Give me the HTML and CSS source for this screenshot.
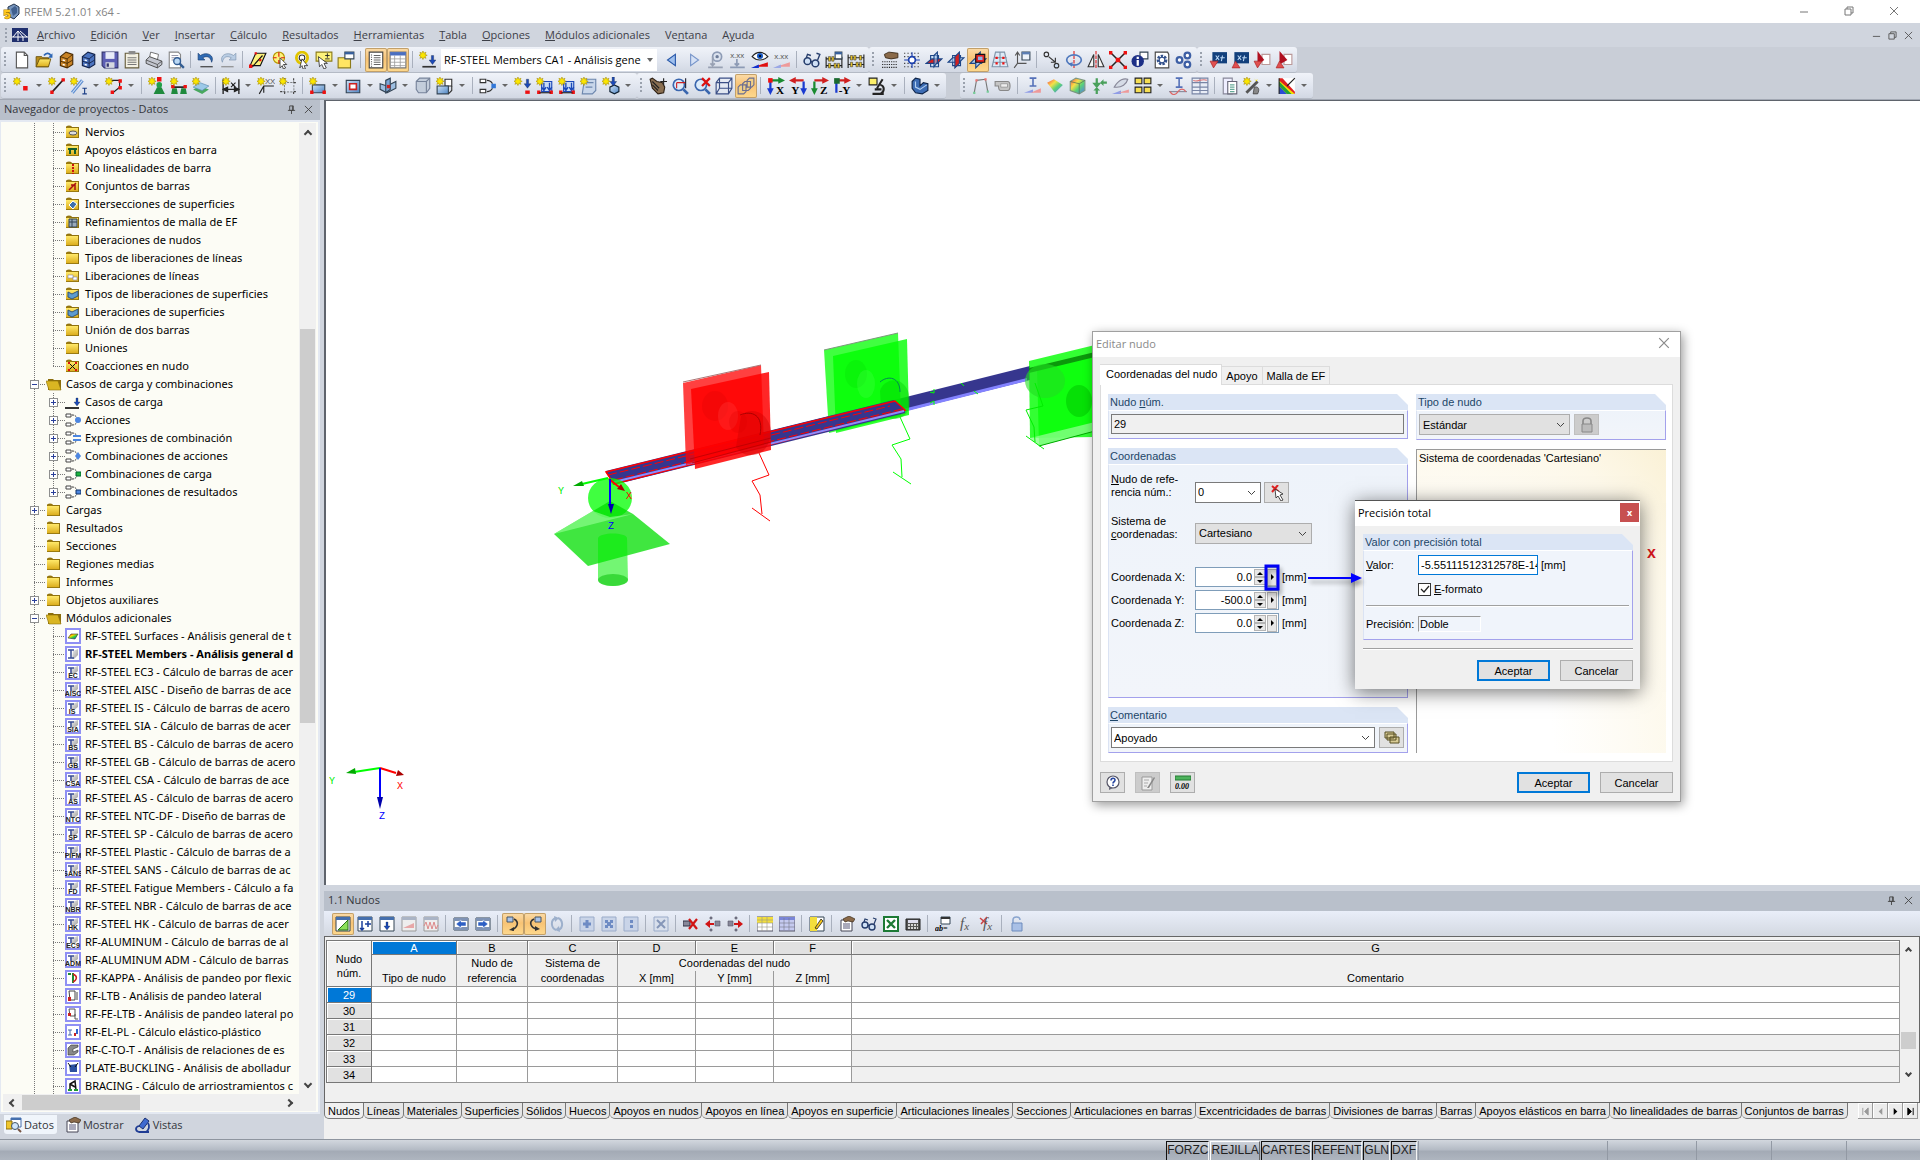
FILE: index.html
```html
<!DOCTYPE html>
<html lang="es">
<head>
<meta charset="utf-8">
<title>RFEM 5.21.01 x64</title>
<link rel="stylesheet" href="styles.css">
</head>
<body>
<svg class="sprite" aria-hidden="true">
<defs>
<linearGradient id="gy" x2="0" y2="1"><stop stop-color="#ffe96a"/><stop offset="1" stop-color="#dcae1e"/></linearGradient>
<linearGradient id="gb" x2="1" y2="1"><stop stop-color="#cfe2f7"/><stop offset="1" stop-color="#4f86c4"/></linearGradient>
<linearGradient id="gr" x2="1" y2="1"><stop stop-color="#f00"/><stop offset=".35" stop-color="#fd0"/><stop offset=".6" stop-color="#2c4"/><stop offset="1" stop-color="#24f"/></linearGradient>
<linearGradient id="gm" x2="1" y2="1"><stop stop-color="#f4f4f4"/><stop offset="1" stop-color="#9a9a9a"/></linearGradient>
<path id="st" d="M3.500 0l.8 1.900 1.900-.8-.8 1.900 1.900.8-1.900.8.8 1.900-1.900-.8-.8 1.900-.8-1.900-1.900.8.8-1.900-1.900-.8 1.900-.8-.8-1.900 1.900.8z" fill="#fbe600" stroke="#a88c00" stroke-width=".5"/>
<path id="dn" d="M-1-4h2v4h2l-3 4-3-4h2z" fill="#1c49b8" stroke="#123" stroke-width=".3"/>
</defs>
<symbol id="new" viewBox="0 0 16 16"><path d="M3 1h7l3 3v11H3z" fill="#fff" stroke="#555"/><path d="M10 1v3h3" fill="none" stroke="#555"/></symbol>
<symbol id="open" viewBox="0 0 16 16"><path d="M1 5h5l1 1h5v8H1z" fill="#b98e1c" stroke="#6b520b" stroke-width=".8"/><path d="M1 14l3-7h10l-2 7z" fill="url(#gy)" stroke="#6b520b" stroke-width=".8"/><path d="M8 4c2-3 5-2 6 0" fill="none" stroke="#2b65b5" stroke-width="1.500"/><path d="M15.500 2v4h-4z" fill="#2b65b5"/></symbol>
<symbol id="cabb" viewBox="0 0 16 16"><path d="M3 5l5-4 6 2v9l-5 3-6-2z" fill="#c98325" stroke="#4a2c05"/><path d="M3 5l6 2 5-4M9 7v8M3 9l6 2 5-3" fill="none" stroke="#4a2c05" stroke-width=".8"/><path d="M5 8l2 .6M5 12l2 .6" stroke="#fff" stroke-width="1.200"/></symbol>
<symbol id="cabl" viewBox="0 0 16 16"><path d="M3 5l5-4 6 2v9l-5 3-6-2z" fill="#4c74c0" stroke="#12224a"/><path d="M3 5l6 2 5-4M9 7v8M3 9l6 2 5-3" fill="none" stroke="#12224a" stroke-width=".8"/><path d="M5 8l2 .6M5 12l2 .6" stroke="#fff" stroke-width="1.200"/></symbol>
<symbol id="save" viewBox="0 0 16 16"><path d="M1 1h14v14H3l-2-2z" fill="#5d5fb4" stroke="#33356f"/><path d="M4 1h8v6H4z" fill="#e8ecf8"/><path d="M4 10h8v5H4z" fill="#d5d8e0"/><path d="M5 11h2v3H5z" fill="#33356f"/></symbol>
<symbol id="clip" viewBox="0 0 16 16"><path d="M2 2h12v13H2z" fill="#f3f0e2" stroke="#665c3c"/><path d="M4 6h8M4 8h8M4 10h8M4 12h8" stroke="#777"/><path d="M5 0h6v3H5z" fill="#8b8b8b"/></symbol>
<symbol id="print" viewBox="0 0 16 16"><path d="M5 1l7 2-1 5-7-2z" fill="#fff" stroke="#666" stroke-width=".8"/><path d="M1 8l3-3 11 4v3l-4 3L1 11z" fill="#c3c6cf" stroke="#444" stroke-width=".8"/><path d="M1 8l10 4 4-3M11 12v3" fill="none" stroke="#444" stroke-width=".7"/></symbol>
<symbol id="prev" viewBox="0 0 16 16"><path d="M2 1h8l2 2v12H2z" fill="#fff" stroke="#888"/><path d="M4 4h6M4 6h6M4 8h4" stroke="#99a"/><circle cx="9" cy="9" r="3" fill="#bcd9f5" stroke="#335d93" stroke-width="1.200"/><path d="M11 11l4 4" stroke="#335d93" stroke-width="2"/></symbol>
<symbol id="undo" viewBox="0 0 16 16"><path d="M1 2v6h6L5 6c4-2 7-1 8 4 3-6-4-10-10-6z" fill="#2f6bb5" stroke="#163b70" stroke-width=".6"/><path d="M3 14h11" stroke="#333"/></symbol>
<symbol id="redo" viewBox="0 0 16 16"><path d="M15 2v6H9l2-2C7 4 4 5 3 10 0 4 7 0 13 4z" fill="#b9cde4" stroke="#7d93ae" stroke-width=".6"/><path d="M2 14h11" stroke="#888"/></symbol>
<symbol id="para" viewBox="0 0 16 16"><path d="M6 2h9l-5 11H1z" fill="#fdf27b" stroke="#111"/><path d="M3 14L12 4" stroke="#111"/><path d="M5 1h2v2H5zM0 12h3v3H0zM9 7h2v2H9z" fill="#e11"/></symbol>
<symbol id="sel" viewBox="0 0 16 16"><circle cx="7" cy="6" r="5" fill="#fdf27b" stroke="#b59700"/><path d="M7 1v4M7 8v3M2 6h3M9 6h3" stroke="#d11"/><path d="M8 6l6 6-3 0 2 3-2 1-1-3-2 2z" fill="#fff" stroke="#222" stroke-width=".7"/></symbol>
<symbol id="sel2" viewBox="0 0 16 16"><circle cx="8" cy="6" r="5" fill="#fff" stroke="#e0c400" stroke-width="2.500"/><circle cx="8" cy="6" r="2.500" fill="none" stroke="#333"/><path d="M8 7l5 6-3 0 1 3-2 0-1-3-2 2z" fill="#fff" stroke="#222" stroke-width=".7"/></symbol>
<symbol id="selb" viewBox="0 0 16 16"><path d="M1 1h14v8H1z" fill="#fdf27b" stroke="#8d7c1b"/><path d="M9 4h4M11 2v4M9 7h4" stroke="#222" stroke-width=".8"/><path d="M3 5l1 9 2-2 2 4 2-1-2-4h3z" fill="#fff" stroke="#222" stroke-width=".7"/></symbol>
<symbol id="note" viewBox="0 0 16 16"><path d="M1 6h11v9H1z" fill="#ffe562" stroke="#8d7c1b"/><path d="M7 1h8v6H7z" fill="#fff" stroke="#345"/><path d="M7 1h8v2H7z" fill="#345f9e"/></symbol>
<symbol id="nav1" viewBox="0 0 16 16"><path d="M2 1h12v14H2z" fill="#fff" stroke="#444"/><path d="M4 3v11" stroke="#555" stroke-dasharray="1 1"/><path d="M6 4h6M6 6h6M6 8h6M6 10h6M6 12h6" stroke="#555" stroke-width=".8"/></symbol>
<symbol id="nav2" viewBox="0 0 16 16"><path d="M1 1h14v14H1z" fill="#fff" stroke="#777"/><path d="M1 1h14v3H1z" fill="#4b6fc0"/><path d="M1 7h14M1 10h14M1 13h14M5 4v11M10 4v11" stroke="#999" stroke-width=".7"/></symbol>
<symbol id="lcn" viewBox="0 0 16 16"><use href="#st"/><use href="#dn" x="12" y="8"/><path d="M3 14h12" stroke="#333" stroke-width="1.500"/></symbol>
<symbol id="lt" viewBox="0 0 16 16"><path d="M11 3v10L4 8z" fill="#9fc0ee" stroke="#2757a8"/></symbol>
<symbol id="rt" viewBox="0 0 16 16"><path d="M5 3v10l7-5z" fill="#d5e1f5" stroke="#7694c9"/></symbol>
<symbol id="seel" viewBox="0 0 16 16"><circle cx="9" cy="5" r="4" fill="#dbe2ee" stroke="#8d9bb5" stroke-width="1.500"/><circle cx="9" cy="5" r="1.500" fill="#6d7c99"/><path d="M5 5v8M3 11l2 2 2-2M1 14.500h13" fill="none" stroke="#98a1b3" stroke-width="1.500"/></symbol>
<symbol id="xx1" viewBox="0 0 16 16"><path d="M7 7v6M5 11l2 2 2-2M1 14.500h13" fill="none" stroke="#8d9bb5" stroke-width="1.500"/></symbol>
<symbol id="eye" viewBox="0 0 16 16"><path d="M1 5c4-5 10-5 14 0-4 4-10 4-14 0z" fill="#fff" stroke="#222"/><circle cx="8" cy="4.500" r="2.700" fill="#1757c0"/><circle cx="8" cy="4.500" r="1" fill="#000"/><path d="M3 14L15 10v4z" fill="#e01010"/><path d="M0 15l7-3v3z" fill="#1130d0"/></symbol>
<symbol id="xx2" viewBox="0 0 16 16"><path d="M3 14L15 10v4z" fill="#ee9a9a"/><path d="M0 15l7-3v3z" fill="#9aa8e6"/></symbol>
<symbol id="glas" viewBox="0 0 16 16"><circle cx="4" cy="9" r="3" fill="#cfe0f5" stroke="#253c6b" stroke-width="1.400"/><circle cx="11" cy="11" r="3" fill="#cfe0f5" stroke="#253c6b" stroke-width="1.400"/><path d="M3 6l1-3 3 1M13 8l2-5-3-1M7 9l1 1" fill="none" stroke="#253c6b" stroke-width="1.200"/></symbol>
<symbol id="abac" viewBox="0 0 16 16"><path d="M1 5v10M15 5v10M1 7h14M1 13h14" stroke="#222"/><path d="M3 5h2v4H3zM6 5h2v4H6zM3 11h2v4H3zM8 11h2v4H8zM11 11h2v4h-2z" fill="#e6c229" stroke="#333" stroke-width=".5"/><path d="M9 1h6v6H9z" fill="#fff" stroke="#345"/><path d="M9 1h6v2H9z" fill="#345f9e"/></symbol>
<symbol id="aba2" viewBox="0 0 16 16"><path d="M1 3v12M15 3v12M1 6h14M1 12h14" stroke="#222"/><path d="M3 4h2v4H3zM6 4h2v4H6zM11 4h2v4h-2zM3 10h2v4H3zM8 10h2v4H8zM11 10h2v4h-2z" fill="#e6c229" stroke="#333" stroke-width=".5"/></symbol>
<symbol id="hand" viewBox="0 0 16 16"><path d="M3 3l4-2 8 1v4l-6 1-5-1z" fill="#8a6a4a" stroke="#3b2a18" stroke-width=".8"/><path d="M1 9.500h14M1 12h14M1 14.500h14" stroke="#222" stroke-dasharray="1 1"/></symbol>
<symbol id="snap" viewBox="0 0 16 16"><path d="M1 2h14M1 5h14M1 11h14M1 14h14" stroke="#333" stroke-dasharray="1 2"/><path d="M8 1v14M1 8h14" stroke="#1b3fae"/><circle cx="8" cy="8" r="3" fill="#fff" stroke="#1b3fae" stroke-width="1.500"/></symbol>
<symbol id="wp1" viewBox="0 0 16 16"><path d="M5 4h7v10H5z" fill="#cfe0f5" stroke="#1c4587"/><path d="M1 11l5-4h9l-4 4z" fill="#d42020" stroke="#1c4587"/><path d="M8 4l3-3v9l-3 4z" fill="#a9c8ee" fill-opacity=".6" stroke="#1c4587"/></symbol>
<symbol id="wp2" viewBox="0 0 16 16"><path d="M5 4h7v9H5z" fill="#cfe0f5" stroke="#1c4587"/><path d="M1 10l4-4h10l-4 4z" fill="#a9c8ee" fill-opacity=".6" stroke="#1c4587"/><path d="M7 5l4-4v10l-4 4z" fill="#d42020" stroke="#1c4587"/></symbol>
<symbol id="wp3" viewBox="0 0 16 16"><path d="M1 11l4-4h10l-4 4z" fill="#a9c8ee" stroke="#1c4587"/><path d="M6 5l4-4v10l-4 4z" fill="#a9c8ee" stroke="#1c4587"/><path d="M6 3h8v7H6z" fill="#e02020" stroke="#111"/><path d="M8 5h4v3H8z" fill="#8fb3e6"/></symbol>
<symbol id="mesh" viewBox="0 0 16 16"><path d="M4 1l-3 13h14L12 1zM3 6h11M2 10h12M8 1v13" fill="#dceaf7" stroke="#7f93a8"/><path d="M4 5h2v2H4zM10 5h2v2h-2zM4 10h2v2H4zM10 10h2v2h-2z" fill="#e11"/></symbol>
<symbol id="cord" viewBox="0 0 16 16"><path d="M4 2v9h8M4 11l-3 4M2 4l2-3 2 3" fill="none" stroke="#555"/><path d="M8 1h7v7H8z" fill="#eef3fa" stroke="#345"/><path d="M8 1h7v2H8z" fill="#5d7fb5"/></symbol>
<symbol id="cpy" viewBox="0 0 16 16"><circle cx="3" cy="3" r="2" fill="none" stroke="#333"/><circle cx="12" cy="13" r="2" fill="#cfe0f5" stroke="#333"/><path d="M5 5l6 5M11 6v4H7" fill="none" stroke="#333"/></symbol>
<symbol id="rot" viewBox="0 0 16 16"><path d="M8 0v16" stroke="#d22" stroke-dasharray="3 1"/><ellipse cx="8" cy="8" rx="6.500" ry="4.500" fill="none" stroke="#4f78bd" stroke-width="1.500"/><path d="M3 11l4-1-1 4z" fill="#4f78bd"/></symbol>
<symbol id="mir" viewBox="0 0 16 16"><path d="M8 0v16" stroke="#d22" stroke-dasharray="3 1"/><path d="M6 3v11H1zM10 3v11h5z" fill="#f4f4f4" stroke="#333"/></symbol>
<symbol id="xred" viewBox="0 0 16 16"><path d="M2 2l12 12M14 2L2 14" stroke="#222" stroke-width="1.300"/><path d="M0 0h3v3H0zM13 0h3v3h-3zM0 13h3v3H0zM13 13h3v3h-3zM6 6h4v4H6z" fill="#e11"/></symbol>
<symbol id="info" viewBox="0 0 16 16"><path d="M8 1h7v6H8z" fill="#fff" stroke="#345"/><circle cx="6" cy="9" r="5.500" fill="#1c2f86"/><path d="M6 5v2M6 8v5" stroke="#fff" stroke-width="2"/></symbol>
<symbol id="gearp" viewBox="0 0 16 16"><path d="M2 1h11l1 2v12H2z" fill="#fff" stroke="#444"/><circle cx="8" cy="8" r="3.500" fill="none" stroke="#33518c" stroke-width="2.500" stroke-dasharray="2 1"/><circle cx="8" cy="8" r="2.500" fill="none" stroke="#33518c"/></symbol>
<symbol id="gears" viewBox="0 0 16 16"><g fill="#fff" stroke="#3d5fa5" stroke-width="2"><circle cx="4" cy="8" r="2.500"/><circle cx="11" cy="4" r="2.500"/><circle cx="11" cy="12" r="2.500"/></g></symbol>
<symbol id="xdn" viewBox="0 0 16 16"><path d="M3 1h13v10H3z" fill="#12407c"/><path d="M6 4l3 4M9 4L6 8M12 4l-1 5M10 6h4" stroke="#bcd8f5"/><path d="M1 9h7l-4 6z" fill="#e05050" stroke="#a22" stroke-width=".6"/></symbol>
<symbol id="xup" viewBox="0 0 16 16"><path d="M3 1h13v10H3z" fill="#12407c"/><path d="M6 4l3 4M9 4L6 8M12 4l-1 5M10 6h4" stroke="#bcd8f5"/><path d="M1 15h7L4 9z" fill="#e05050" stroke="#a22" stroke-width=".6"/></symbol>
<symbol id="pdn" viewBox="0 0 16 16"><path d="M8 3h7v9H8z" fill="#fff" stroke="#b99"/><path d="M4 0l6 8-6 4z" fill="#b01020"/><path d="M1 9h7l-4 6z" fill="#e05050" stroke="#a22" stroke-width=".6"/></symbol>
<symbol id="pup" viewBox="0 0 16 16"><path d="M8 3h7v9H8z" fill="#fff" stroke="#b99"/><path d="M4 0l7 8-7 4z" fill="#b01020"/><path d="M1 15h7L4 9z" fill="#e05050" stroke="#a22" stroke-width=".6"/></symbol>
<symbol id="nnode" viewBox="0 0 16 16"><use href="#st"/><path d="M9 8h4v4H9z" fill="#e11"/></symbol>
<symbol id="nline" viewBox="0 0 16 16"><path d="M4 13L14 2" stroke="#222" stroke-width="1.500"/><path d="M2 12h3v3H2zM12 1h3v3h-3z" fill="#e11"/><use href="#st"/></symbol>
<symbol id="nbar" viewBox="0 0 16 16"><path d="M2 14L11 3" stroke="#5b8cd0" stroke-width="3"/><path d="M2 14L11 3" stroke="#cfe0f5"/><path d="M11 10h4M13 10v5M11 15h4" stroke="#1c3f86"/><use href="#st"/></symbol>
<symbol id="npoly" viewBox="0 0 16 16"><path d="M6 3h7v6l-6 5" fill="none" stroke="#222"/><path d="M12 2h3v3h-3zM12 8h3v3h-3zM5 12h3v3H5z" fill="#e11"/><use href="#st"/></symbol>
<symbol id="nsup" viewBox="0 0 16 16"><circle cx="10" cy="7" r="2.500" fill="#22a04a"/><path d="M8 9h4l3 6H5z" fill="#1f8a3e"/><path d="M8 0h4v4H8z" fill="#e11"/><use href="#st"/></symbol>
<symbol id="nlsu" viewBox="0 0 16 16"><path d="M3 9h10" stroke="#222" stroke-width="1.500"/><path d="M2 10h4l1 5H1zM10 10h4l1 5H9z" fill="#1f8a3e"/><path d="M1 7h3v3H1zM12 7h3v3h-3z" fill="#e11"/><use href="#st"/></symbol>
<symbol id="nssu" viewBox="0 0 16 16"><path d="M1 11l6-3 8 3-6 4z" fill="#49a860"/><path d="M1 9l6-4 8 3-6 4z" fill="#9cc9e8" stroke="#5b8cb0" stroke-width=".6"/><use href="#st"/></symbol>
<symbol id="dim" viewBox="0 0 16 16"><path d="M1 2v13M15 2v13M1 11h14" stroke="#222" stroke-width="1.200"/><path d="M1 11l4-2v4zM15 11l-4-2v4zM8 5l4 4M12 5L8 9" fill="#222" stroke="#222"/><use href="#st"/></symbol>
<symbol id="xxl" viewBox="0 0 16 16"><path d="M2 15L6 8h9M6 8v6" fill="none" stroke="#222"/><use href="#st"/></symbol>
<symbol id="ngrd" viewBox="0 0 16 16"><path d="M5 1v14M13 1v14M1 5h14M1 13h14" stroke="#444" stroke-dasharray="2 1"/><path d="M5 5h8v8H5z" fill="#e3e8f2"/><use href="#st"/></symbol>
<symbol id="nsrf" viewBox="0 0 16 16"><path d="M3 7h11v7H3z" fill="url(#gb)" stroke="#345"/><path d="M1 12h3v3H1zM12 12h3v3h-3z" fill="#e11"/><use href="#st"/></symbol>
<symbol id="nope" viewBox="0 0 16 16"><path d="M2 3h12v11H2z" fill="url(#gb)" stroke="#345"/><path d="M5 6h6v5H5z" fill="#fff" stroke="#c22" stroke-width="1.400"/></symbol>
<symbol id="nint" viewBox="0 0 16 16"><path d="M1 6l6 2 8-4v6l-8 4-6-3z" fill="#9dbfe2" stroke="#345"/><path d="M6 3l4-2v10l-4 3z" fill="#7aa5d6" stroke="#345"/><path d="M7 7h3v3H7z" fill="#c22"/></symbol>
<symbol id="nsol" viewBox="0 0 16 16"><path d="M2 4l3-3h9v9l-3 4H4l-2-3z" fill="#c3cddb" stroke="#76839a"/><path d="M2 4h9l3-3M11 4v10" fill="none" stroke="#76839a"/></symbol>
<symbol id="nsol2" viewBox="0 0 16 16"><path d="M8 2h6v6H8z" fill="#fff" stroke="#333"/><path d="M1 8h10v7H1z" fill="url(#gb)" stroke="#345"/><path d="M11 15l3-3V8" fill="none" stroke="#333"/><use href="#st"/></symbol>
<symbol id="comb" viewBox="0 0 16 16"><path d="M1 2h5v3H1zM1 11h5v3H1z" fill="#fff" stroke="#333"/><path d="M7 3c3 0 4 1 5 3M7 13c3 0 4-1 5-3" fill="none" stroke="#333"/><path d="M11 6h4v4h-4z" fill="#3378d8"/></symbol>
<symbol id="nfor" viewBox="0 0 16 16"><use href="#dn" x="12" y="6"/><path d="M10 12h4v3h-4z" fill="#e11"/><use href="#st"/></symbol>
<symbol id="nlfo" viewBox="0 0 16 16"><path d="M5 4h9v9H5z" fill="#c9dcf4" stroke="#1c49b8"/><path d="M7 5v6M12 5v6M5 9l2 3 2-3M10 9l2 3 2-3" fill="none" stroke="#1c49b8" stroke-width="1.200"/><path d="M1 12h3v3H1zM12 12h3v3h-3z" fill="#e11"/><path d="M3 14h10" stroke="#222"/><use href="#st"/></symbol>
<symbol id="nsfo" viewBox="0 0 16 16"><path d="M4 2h10v10l-3 3H2z" fill="#c8d6ea" stroke="#6c86ad"/><path d="M6 5h6M5 9h6" stroke="#6c86ad"/><use href="#st"/></symbol>
<symbol id="nvfo" viewBox="0 0 16 16"><path d="M7 9l4-2 4 2v4l-4 2-4-2z" fill="url(#gb)" stroke="#123"/><use href="#dn" x="10" y="4"/><use href="#st"/></symbol>
<symbol id="pan" viewBox="0 0 16 16"><path d="M1 2l2-1 4 3 5 1 2 4-1 5-5 1-5-5z" fill="#8a6f52" stroke="#2e2115"/><path d="M13 1v6M10 4h6M3 4l6 6M3 7l5 5" stroke="#222"/></symbol>
<symbol id="zin" viewBox="0 0 16 16"><circle cx="7" cy="7" r="5" fill="#dcebfa" stroke="#3a66ae" stroke-width="1.500"/><path d="M5 5h8M5 5v5" fill="none" stroke="#c22"/><path d="M13 1v9" stroke="#223"/><path d="M11 11l4 4" stroke="#3a66ae" stroke-width="2.500"/></symbol>
<symbol id="zx" viewBox="0 0 16 16"><circle cx="7" cy="7" r="5" fill="#dcebfa" stroke="#3a66ae" stroke-width="1.500"/><path d="M11 11l4 4" stroke="#3a66ae" stroke-width="2.500"/><path d="M8 1l7 7M15 1L8 8" stroke="#d11" stroke-width="2"/></symbol>
<symbol id="cube" viewBox="0 0 16 16"><path d="M1 5l3-4h11v9l-3 5H1zM1 5h11v10M12 5l3-4M4 1v9h11M4 10l-3 5" fill="#e8eef8" fill-opacity=".5" stroke="#3b4f86"/></symbol>
<symbol id="cub3" viewBox="0 0 16 16"><g fill="#f0cf87" stroke="#6b6e90"><path d="M9 3l2-2h4v6l-2 2H9zM5 6l2-2h5v6l-2 2H5zM1 9l2-2h5v6l-2 2H1z"/></g></symbol>
<symbol id="vx" viewBox="0 0 16 16"><path d="M3 3h10" stroke="#1a8a30" stroke-width="2"/><path d="M10 0l6 3-6 3z" fill="#1a8a30"/><path d="M3 4v8" stroke="#1a3ad0" stroke-width="2"/><path d="M0 10h6l-3 6z" fill="#1a3ad0"/><path d="M1 1h4v4H1z" fill="#e11"/></symbol>
<symbol id="vy" viewBox="0 0 16 16"><path d="M3 3h10" stroke="#d02020" stroke-width="2"/><path d="M6 0L0 3l6 3z" fill="#d02020"/><path d="M13 4v8" stroke="#1a3ad0" stroke-width="2"/><path d="M10 10h6l-3 6z" fill="#1a3ad0"/></symbol>
<symbol id="vz" viewBox="0 0 16 16"><path d="M3 3h10" stroke="#d02020" stroke-width="2"/><path d="M10 0l6 3-6 3z" fill="#d02020"/><path d="M3 4v8" stroke="#1a8a30" stroke-width="2"/><path d="M0 10h6l-3 6z" fill="#1a8a30"/></symbol>
<symbol id="vm" viewBox="0 0 16 16"><path d="M3 3h10" stroke="#d02020" stroke-width="2"/><path d="M10 0l6 3-6 3z" fill="#d02020"/><path d="M3 4v10" stroke="#1a3ad0" stroke-width="2"/><path d="M1 1h5v5H1z" fill="#1a6a30"/></symbol>
<symbol id="micr" viewBox="0 0 16 16"><path d="M1 1h7v6H1z" fill="#fdf06a" stroke="#222"/><path d="M13 2L8 10M6 11h6M4 15h10M11 7c4 1 4 6 0 8" fill="none" stroke="#222" stroke-width="1.800"/></symbol>
<symbol id="ushp" viewBox="0 0 16 16"><path d="M1 4l3-3 4 1v6l3-3 4 1v6l-5 3-6-1-3-4z" fill="#3c6cb4" stroke="#0e2448"/><path d="M4 4v5l4 2 6-4" fill="none" stroke="#b3d0f0"/></symbol>
<symbol id="frm" viewBox="0 0 16 16"><path d="M2 14L4 3l8-1 2 11" fill="none" stroke="#777"/><path d="M3 2h2v2H3zM11 1h2v2h-2z" fill="#e77"/><path d="M1 13h2v2H1zM13 12h2v2h-2z" fill="#7c9"/></symbol>
<symbol id="barr" viewBox="0 0 16 16"><path d="M3 4h9c3 0 3 8 0 8H6c-2 0-2-3-2-4L1 8V4z" fill="#c4c4c4" stroke="#888"/><path d="M6 6h6v3H6z" fill="#eee" stroke="#888" stroke-width=".6"/></symbol>
<symbol id="ired" viewBox="0 0 16 16"><path d="M5 1h6M8 1v7M5 8h6" stroke="#5470b8" stroke-width="1.400"/><path d="M0 14l8-3v3z" fill="#8f9ce6"/><path d="M6 14l9-4v4z" fill="#e99"/></symbol>
<symbol id="rain" viewBox="0 0 16 16"><path d="M1 5l6-3 8 5-7 7z" fill="url(#gr)" opacity=".7"/></symbol>
<symbol id="raic" viewBox="0 0 16 16"><path d="M2 4l5-3 8 2v9l-5 3-8-3z" fill="url(#gr)" opacity=".7" stroke="#575"/><path d="M2 4l8 2 5-3M10 6v9" fill="none" stroke="#575" stroke-width=".7"/></symbol>
<symbol id="supg" viewBox="0 0 16 16"><path d="M6 1v5M10 5h5M6 10v5" stroke="#4aa05c" stroke-width="2" fill="none"/><path d="M2 5h8l-4 5zM3 12l3-3 3 3zM12 2v6l-3-3z" fill="#4aa05c"/></symbol>
<symbol id="leaf" viewBox="0 0 16 16"><path d="M2 9c4-7 9-8 12-7-1 4-5 8-12 7z" fill="#d5dbe6" stroke="#889"/><path d="M0 15l8-3v3z" fill="#8f9ce6"/><path d="M6 14l9-3v3z" fill="#e99"/></symbol>
<symbol id="quad" viewBox="0 0 16 16"><g fill="#f6df53" stroke="#222"><path d="M1 1h6v5H1zM9 1h6v5H9zM1 9h6v5H1zM9 9h6v5H9z"/></g></symbol>
<symbol id="icur" viewBox="0 0 16 16"><path d="M6 1h6M9 1v8M6 9h6" stroke="#5470b8" stroke-width="1.400"/><path d="M0 13h16" stroke="#889"/><path d="M1 13c2 4 5 3 7 0s5-3 7 0" fill="none" stroke="#d66"/></symbol>
<symbol id="rgrd" viewBox="0 0 16 16"><path d="M1 1h14v14H1zM1 5h14M1 9h14M1 12h14M8 1v14" fill="#e9edf6" stroke="#7885a5"/><path d="M2 3c3 2 8-2 12 0" stroke="#d77" fill="none"/></symbol>
<symbol id="rept" viewBox="0 0 16 16"><path d="M2 1h8v14H2z" fill="#eef" stroke="#889"/><path d="M6 4h8v11H6z" fill="#fff" stroke="#667"/><path d="M8 7h4M8 9h4M8 11h4M8 13h4" stroke="#6a9"/></symbol>
<symbol id="wand" viewBox="0 0 16 16"><path d="M3 14L13 4" stroke="#555" stroke-width="2.500"/><path d="M10 9c4-1 5 2 3 6H9z" fill="#888" stroke="#333" stroke-width=".6"/><path d="M10 1l1 2 2-1-1 2" fill="#f5e000"/><use href="#st"/></symbol>
<symbol id="colr" viewBox="0 0 16 16"><path d="M1 1h14v14H1z" fill="#fff"/><path d="M1 1l14 14H1z" fill="#f5e000"/><path d="M1 8l7 7H1z" fill="#2a4ad8"/><path d="M1 4l11 11H8L1 8z" fill="#22a33a"/><path d="M1 1h3l11 12v2L1 3z" fill="#e02020"/><path d="M8 8L15 1M1 15L1 1" stroke="#222"/></symbol>
<symbol id="t1" viewBox="0 0 16 16"><path d="M1 1h14v14H1z" fill="#fff" stroke="#345"/><path d="M1 1h14v3H1z" fill="#456fae"/><path d="M3 14L13 4v10z" fill="#8be05a" stroke="#276e17"/></symbol>
<symbol id="t2" viewBox="0 0 16 16"><path d="M1 1h14v14H1z" fill="#fff" stroke="#345"/><path d="M1 1h14v3H1z" fill="#456fae"/><path d="M5 5v9M3 12l2 2 2-2M11 5v6M8 8h6" stroke="#1b3f9c" stroke-width="1.500" fill="none"/></symbol>
<symbol id="t3" viewBox="0 0 16 16"><path d="M1 1h14v14H1z" fill="#fff" stroke="#345"/><path d="M1 1h14v3H1z" fill="#456fae"/><use href="#dn" x="8" y="10"/></symbol>
<symbol id="t4" viewBox="0 0 16 16"><path d="M1 1h14v14H1z" fill="#eee" stroke="#999"/><path d="M1 1h14v3H1z" fill="#aab4c6"/><path d="M2 12l11-5v5z" fill="#e7a7a7"/></symbol>
<symbol id="t5" viewBox="0 0 16 16"><path d="M1 1h14v14H1z" fill="#eee" stroke="#999"/><path d="M1 1h14v3H1z" fill="#aab4c6"/><path d="M1 10l2-4 2 7 2-7 2 7 2-7 2 7 2-4" fill="none" stroke="#d88"/></symbol>
<symbol id="t6" viewBox="0 0 16 16"><path d="M1 2h14v12H1z" fill="#fff" stroke="#345"/><path d="M1 2h14v3H1zM1 11h14v3H1z" fill="#7f93b5"/><path d="M3 8l5-4v2h5v4H8v2z" fill="#2d5fc4" stroke="#fff" stroke-width=".5"/></symbol>
<symbol id="t7" viewBox="0 0 16 16"><path d="M1 2h14v12H1z" fill="#fff" stroke="#345"/><path d="M1 2h14v3H1zM1 11h14v3H1z" fill="#7f93b5"/><path d="M13 8L8 4v2H3v4h5v2z" fill="#2d5fc4" stroke="#fff" stroke-width=".5"/></symbol>
<symbol id="t8" viewBox="0 0 16 16"><path d="M2 1h6v5H2z" fill="#a9c3e8" stroke="#456"/><path d="M9 3c6 3 3 9-2 11" fill="none" stroke="#333" stroke-width="1.600"/><path d="M4 14l5-3v4z" fill="#333"/></symbol>
<symbol id="t9" viewBox="0 0 16 16"><path d="M8 1h6v5H8z" fill="#a9c3e8" stroke="#456"/><path d="M7 3c-6 3-3 9 3 10" fill="none" stroke="#333" stroke-width="1.600"/><path d="M13 13l-5-3v5z" fill="#333"/></symbol>
<symbol id="t10" viewBox="0 0 16 16"><path d="M7 2c-6 2-5 10 0 12M9 14c6-2 5-10 0-12" fill="none" stroke="#9db0cc" stroke-width="2"/><path d="M5 0l5 2-4 4zM11 16l-5-2 4-4z" fill="#9db0cc"/></symbol>
<symbol id="p1" viewBox="0 0 16 16"><path d="M1 1h14v14H1z" fill="#c9d4e8" stroke="#9aabc9"/><path d="M8 4v8M4 8h8" stroke="#6f8cc4" stroke-width="3"/></symbol>
<symbol id="p2" viewBox="0 0 16 16"><path d="M1 1h14v14H1z" fill="#c9d4e8" stroke="#9aabc9"/><path d="M4 4h3v3H4zM9 4h3v3H9zM4 9h3v3H4zM9 9h3v3H9zM6 6h4v4H6z" fill="#6f8cc4"/></symbol>
<symbol id="p3" viewBox="0 0 16 16"><path d="M1 1h14v14H1z" fill="#c9d4e8" stroke="#9aabc9"/><path d="M7 4h3v3H7zM7 9h3v3H7z" fill="#6f8cc4"/></symbol>
<symbol id="p4" viewBox="0 0 16 16"><path d="M1 1h14v14H1z" fill="#d8dfec" stroke="#9aabc9"/><path d="M4 4l8 8M12 4l-8 8" stroke="#8596b8" stroke-width="2"/></symbol>
<symbol id="r1" viewBox="0 0 16 16"><path d="M0 5h7v5H0z" fill="#889" stroke="#334"/><path d="M6 3l8 10M14 3L6 13" stroke="#d01515" stroke-width="2.200"/></symbol>
<symbol id="r2" viewBox="0 0 16 16"><path d="M10 5h5v5h-5zM5 1h2v2H5zM5 13h2v2H5z" fill="#889" stroke="#556" stroke-width=".6"/><path d="M0 8l5-4v3h4v2H5v3z" fill="#d01515"/></symbol>
<symbol id="r3" viewBox="0 0 16 16"><path d="M1 5h5v5H1zM8 1h2v2H8zM8 13h2v2H8z" fill="#889" stroke="#556" stroke-width=".6"/><path d="M16 8l-5-4v3H7v2h4v3z" fill="#d01515"/></symbol>
<symbol id="y1" viewBox="0 0 16 16"><path d="M0 1h16v14H0z" fill="#fff" stroke="#556"/><path d="M0 1h16v6H0z" fill="#f3de3d"/><path d="M0 4h16M0 7h16M0 11h16M5 1v14M10 1v14" stroke="#998" stroke-width=".6"/></symbol>
<symbol id="y2" viewBox="0 0 16 16"><path d="M0 1h16v14H0z" fill="#c5caf0" stroke="#556"/><path d="M0 1h16v3H0z" fill="#7a86d8"/><path d="M0 7h16M0 11h16M5 2v12M10 2v12" stroke="#778" stroke-width=".6"/></symbol>
<symbol id="edt" viewBox="0 0 16 16"><path d="M1 1h14v14H1z" fill="#fff" stroke="#345"/><path d="M1 1h7v14H1z" fill="#f3de3d"/><path d="M6 12L12 3l2 2-6 8z" fill="#f5c518" stroke="#222" stroke-width=".8"/></symbol>
<symbol id="prop" viewBox="0 0 16 16"><path d="M2 4h11v11H2z" fill="#fff" stroke="#445"/><path d="M4 8h7M4 10h7M4 12h7" stroke="#557"/><path d="M4 3l6-3 6 3-2 3-5-1-3 1z" fill="#8a6a4a" stroke="#3b2a18" stroke-width=".7"/></symbol>
<symbol id="xls" viewBox="0 0 16 16"><path d="M1 1h14v14H1z" fill="#fff" stroke="#1d7a35" stroke-width="2"/><path d="M4 4l8 8M12 4l-8 8" stroke="#1d7a35" stroke-width="2.400"/></symbol>
<symbol id="calc" viewBox="0 0 16 16"><path d="M1 3h14v11H1z" fill="#555" stroke="#222"/><path d="M3 4h10v3H3z" fill="#dde"/><path d="M3 9h10M3 12h10" stroke="#fff" stroke-width="1.500" stroke-dasharray="2 1"/></symbol>
<symbol id="ab" viewBox="0 0 16 16"><path d="M6 1h9v7H6z" fill="#fff" stroke="#345"/><path d="M6 1h9v2H6z" fill="#333"/></symbol>
<symbol id="fxx" viewBox="0 0 16 16"><path d="M1 2l7 6M8 1L2 8" stroke="#c44" stroke-width="1.500"/></symbol>
<symbol id="lock" viewBox="0 0 16 16"><path d="M4 8V4c0-4 7-4 7 0" fill="none" stroke="#8aa5cf" stroke-width="1.600"/><path d="M3 7h10v8H3z" fill="#a9c0e6" stroke="#6d8bbd"/></symbol>
<symbol id="f" viewBox="0 0 16 16"><path d="M1 4V3l1-1h4l1 1h7v11H1z" fill="#9b7b10"/><path d="M1 4h12v9H1z" fill="url(#gy)"/><path d="M1.500 4V3l1-1h3l1 1.500h7V14" fill="none" stroke="#8c6e0c" stroke-width=".8"/></symbol>
<symbol id="fo" viewBox="0 0 16 16"><path d="M2 3h5l1 1h7v10H2z" fill="#8c6e0c"/><path d="M0 5h12l3 9H3z" fill="#d9b522" stroke="#8c6e0c" stroke-width=".6"/></symbol>
<symbol id="mod" viewBox="0 0 16 16"><path d="M1 1h14v14H1z" fill="#fff" stroke="#8f90f4" stroke-width="2"/><path d="M7 4l6-2v5l-4 3H6z" fill="url(#gm)"/><path d="M3 4h6M6 4v5" stroke="#3b4f94" stroke-width="1.600"/></symbol>
<symbol id="modb" viewBox="0 0 16 16"><path d="M1 1h14v14H1z" fill="#fff" stroke="#8f90f4" stroke-width="2"/></symbol>
<symbol id="cb" viewBox="0 0 16 16"><path d="M1 2h5v3H1zM1 11h5v3H1z" fill="#fff" stroke="#444"/><path d="M7 3c3 0 4 1 5 3M7 13c3 0 4-1 5-3" fill="none" stroke="#333" stroke-dasharray="2 1"/></symbol>
<symbol id="pin" viewBox="0 0 10 10"><path d="M3 1h4v5H3zM1 6h8M5 6v4M6 1v5" fill="none" stroke="#444"/></symbol>
<symbol id="cls" viewBox="0 0 10 10"><path d="M1 1l8 8M9 1L1 9" fill="none" stroke="currentColor"/></symbol>
<symbol id="rst" viewBox="0 0 10 10"><path d="M1 3h6v6H1zM3 3V1h6v6H7" fill="none" stroke="currentColor"/></symbol>
<symbol id="min" viewBox="0 0 10 10"><path d="M1 6h8" stroke="currentColor"/></symbol>
</svg>

<header class="titlebar">
  <svg class="app" viewBox="0 0 18 18"><path d="M6 4l6-3 5 3v7l-5 5-6-3z" fill="#7795bd" stroke="#22344f"/><path d="M9 6l4-3 2 2v5l-4 3z" fill="#3f5f8e"/><path d="M8 8H3v3c4-1 5 1 4 3-1 1-3 1-4 0" fill="none" stroke="#a87b00" stroke-width="3"/><path d="M8 8H3v3c4-1 5 1 4 3-1 1-3 1-4 0" fill="none" stroke="#ffc81e" stroke-width="1.800"/></svg>
  <h1>RFEM 5.21.01 x64 -</h1>
  <div class="winctl"><button aria-label="Minimizar"><svg><use href="#min"/></svg></button><button aria-label="Restaurar"><svg><use href="#rst"/></svg></button><button aria-label="Cerrar"><svg><use href="#cls"/></svg></button></div>
</header>
<nav class="menubar">
  <i class="grip"></i>
  <svg class="mdi" viewBox="0 0 16 14"><path d="M0 0h16v14H0z" fill="#20306e"/><path d="M0 9h16M6 3v10M6 3L1 9M6 3l5 6M8 3l7 6M11 9v4" stroke="#fff" fill="none"/></svg>
  <a href="#"><u>A</u>rchivo</a><a href="#"><u>E</u>dición</a><a href="#"><u>V</u>er</a><a href="#"><u>I</u>nsertar</a><a href="#"><u>C</u>álculo</a><a href="#"><u>R</u>esultados</a><a href="#"><u>H</u>erramientas</a><a href="#"><u>T</u>abla</a><a href="#"><u>O</u>pciones</a><a href="#"><u>M</u>ódulos adicionales</a><a href="#">Ve<u>n</u>tana</a><a href="#">A<u>y</u>uda</a>
  <div class="mdictl"><button aria-label="Minimizar documento"><svg><use href="#min"/></svg></button><button aria-label="Restaurar documento"><svg><use href="#rst"/></svg></button><button aria-label="Cerrar documento"><svg><use href="#cls"/></svg></button></div>
</nav>

<div class="toolrow">
  <div class="group"><i class="grip"></i>
    <button aria-label="Nuevo"><svg><use href="#new"/></svg></button><button aria-label="Abrir"><svg><use href="#open"/></svg></button><button aria-label="Administrador de proyectos"><svg><use href="#cabb"/></svg></button><button aria-label="Bloques"><svg><use href="#cabl"/></svg></button><button aria-label="Guardar"><svg><use href="#save"/></svg></button><button aria-label="Portapapeles"><svg><use href="#clip"/></svg></button><button aria-label="Imprimir"><svg><use href="#print"/></svg></button><button aria-label="Informe"><svg><use href="#prev"/></svg></button><i class="sep"></i>
    <button aria-label="Deshacer"><svg><use href="#undo"/></svg></button><button aria-label="Rehacer"><svg><use href="#redo"/></svg></button><i class="sep"></i>
    <button aria-label="Selección plano"><svg><use href="#para"/></svg></button><button aria-label="Selección"><svg><use href="#sel"/></svg></button><button aria-label="Selección especial"><svg><use href="#sel2"/></svg></button><button aria-label="Añadir selección"><svg><use href="#selb"/></svg></button><button aria-label="Ventana nueva"><svg><use href="#note"/></svg></button><i class="sep"></i>
    <button class="on" aria-label="Navegador"><svg><use href="#nav1"/></svg></button><button class="on" aria-label="Tablas"><svg><use href="#nav2"/></svg></button><i class="sep"></i>
    <button aria-label="Nuevo caso"><svg><use href="#lcn"/></svg></button>
    <select class="casebox" aria-label="Caso de carga"><option>RF-STEEL Members CA1 - Análisis gene</option></select>
    <button aria-label="Anterior"><svg><use href="#lt"/></svg></button><button aria-label="Siguiente"><svg><use href="#rt"/></svg></button><button aria-label="Mostrar cargas"><svg><use href="#seel"/></svg></button><button aria-label="Valores de carga"><svg viewBox="0 0 16 16"><use href="#xx1"/><text x="1" y="6" class="t6">x.xx</text></svg></button><button aria-label="Mostrar resultados"><svg><use href="#eye"/></svg></button><button aria-label="Valores de resultado"><svg viewBox="0 0 16 16"><use href="#xx2"/><text x="1" y="7" class="t6">x.xx</text></svg></button><i class="sep"></i>
    <button aria-label="Comprobar"><svg><use href="#glas"/></svg></button><button aria-label="Calcular"><svg><use href="#abac"/></svg></button><button aria-label="Calcular todo"><svg><use href="#aba2"/></svg></button>
  </div>
  <div class="group"><i class="grip"></i>
    <button aria-label="Rejilla"><svg><use href="#hand"/></svg></button><button aria-label="Referencia"><svg><use href="#snap"/></svg></button><button aria-label="Plano XY"><svg><use href="#wp1"/></svg></button><button aria-label="Plano YZ"><svg><use href="#wp2"/></svg></button><button class="on" aria-label="Plano XZ"><svg><use href="#wp3"/></svg></button><button aria-label="Malla"><svg><use href="#mesh"/></svg></button><button aria-label="Sistema"><svg><use href="#cord"/></svg></button><i class="sep"></i>
    <button aria-label="Mover"><svg><use href="#cpy"/></svg></button><button aria-label="Girar"><svg><use href="#rot"/></svg></button><button aria-label="Simetría"><svg><use href="#mir"/></svg></button><button aria-label="Conectar"><svg><use href="#xred"/></svg></button><button aria-label="Información"><svg><use href="#info"/></svg></button><button aria-label="Configuración"><svg><use href="#gearp"/></svg></button><button aria-label="Opciones"><svg><use href="#gears"/></svg></button>
  </div>
  <div class="group"><i class="grip"></i>
    <button aria-label="Importar"><svg><use href="#xdn"/></svg></button><button aria-label="Exportar"><svg><use href="#xup"/></svg></button><button aria-label="Importar PDF"><svg><use href="#pdn"/></svg></button><button aria-label="Exportar PDF"><svg><use href="#pup"/></svg></button>
  </div>
</div>
<div class="toolrow">
  <div class="group"><i class="grip"></i>
    <button class="dd" aria-label="Nudo"><svg><use href="#nnode"/></svg></button><button aria-label="Línea"><svg><use href="#nline"/></svg></button><button class="dd" aria-label="Barra"><svg><use href="#nbar"/></svg></button><button class="dd" aria-label="Polilínea"><svg><use href="#npoly"/></svg></button><i class="sep"></i>
    <button aria-label="Apoyo en nudo"><svg><use href="#nsup"/></svg></button><button aria-label="Apoyo en línea"><svg><use href="#nlsu"/></svg></button><button aria-label="Apoyo en superficie"><svg><use href="#nssu"/></svg></button><i class="sep"></i>
    <button class="dd" aria-label="Cota"><svg><use href="#dim"/></svg></button><button aria-label="Comentario nuevo"><svg viewBox="0 0 16 16"><use href="#xxl"/><text x="7" y="6" class="t6">XX</text></svg></button><button aria-label="Líneas auxiliares"><svg><use href="#ngrd"/></svg></button><i class="sep"></i>
    <button class="dd" aria-label="Superficie"><svg><use href="#nsrf"/></svg></button><button class="dd" aria-label="Hueco"><svg><use href="#nope"/></svg></button><button class="dd" aria-label="Intersección"><svg><use href="#nint"/></svg></button><button aria-label="Sólido"><svg><use href="#nsol"/></svg></button><button class="dd" aria-label="Sólido nuevo"><svg><use href="#nsol2"/></svg></button><i class="sep"></i>
    <button class="dd" aria-label="Combinación"><svg><use href="#comb"/></svg></button><button aria-label="Carga en nudo"><svg><use href="#nfor"/></svg></button><button aria-label="Carga en barra"><svg><use href="#nlfo"/></svg></button><button aria-label="Carga en línea"><svg><use href="#nlfo"/></svg></button><button aria-label="Carga en superficie"><svg><use href="#nsfo"/></svg></button><button class="dd" aria-label="Carga en sólido"><svg><use href="#nvfo"/></svg></button>
  </div>
  <div class="group"><i class="grip"></i>
    <button aria-label="Desplazar"><svg><use href="#pan"/></svg></button><button aria-label="Zoom ventana"><svg><use href="#zin"/></svg></button><button aria-label="Zoom previo"><svg><use href="#zx"/></svg></button><button aria-label="Isométrica"><svg><use href="#cube"/></svg></button><button class="on" aria-label="Perspectiva"><svg><use href="#cub3"/></svg></button><i class="sep"></i>
    <button aria-label="Vista X"><svg viewBox="0 0 16 16"><use href="#vx"/><text x="8" y="15" class="t9">X</text></svg></button><button aria-label="Vista Y"><svg viewBox="0 0 16 16"><use href="#vy"/><text x="2" y="15" class="t9">Y</text></svg></button><button aria-label="Vista Z"><svg viewBox="0 0 16 16"><use href="#vz"/><text x="8" y="15" class="t9">Z</text></svg></button><button class="dd" aria-label="Vista -Y"><svg viewBox="0 0 16 16"><use href="#vm"/><text x="5" y="15" class="t9">-Y</text></svg></button><button class="dd" aria-label="Visibilidad"><svg><use href="#micr"/></svg></button><i class="sep"></i>
    <button class="dd" aria-label="Representación"><svg><use href="#ushp"/></svg></button>
  </div>
  <div class="group apart"><i class="grip"></i>
    <button aria-label="Deformaciones"><svg><use href="#frm"/></svg></button><button aria-label="Esfuerzos"><svg><use href="#barr"/></svg></button><i class="sep"></i>
    <button aria-label="Barras resultados"><svg><use href="#ired"/></svg></button><button aria-label="Superficies resultados"><svg><use href="#rain"/></svg></button><button aria-label="Sólidos resultados"><svg><use href="#raic"/></svg></button><button aria-label="Reacciones"><svg><use href="#supg"/></svg></button><button aria-label="Secciones resultados"><svg><use href="#leaf"/></svg></button><button class="dd" aria-label="Ventanas"><svg><use href="#quad"/></svg></button><button aria-label="Diagrama"><svg><use href="#icur"/></svg></button><button aria-label="Tabla resultados"><svg><use href="#rgrd"/></svg></button><i class="sep"></i>
    <button aria-label="Listado"><svg><use href="#rept"/></svg></button><button class="dd" aria-label="Asistente"><svg><use href="#wand"/></svg></button><button class="dd" aria-label="Colores"><svg><use href="#colr"/></svg></button>
  </div>
</div>

<main class="work">
<aside class="navigator">
  <h2 class="panehead">Navegador de proyectos - Datos<svg><use href="#pin"/></svg><svg><use href="#cls"/></svg></h2>
  <div class="treebox">
    <div class="treeview">
    <div class="treeclip">
    <ul class="tree">
      <li><ul class="sub closed">
        <li><svg><use href="#f"/><ellipse cx="8" cy="9" rx="4" ry="2" fill="#ddd" stroke="#555"/></svg>Nervios</li>
        <li><svg><use href="#f"/><path d="M3 6h9v2H3zM4 8h2v4H4zM9 8h2v4H9z" fill="#155e2c"/></svg>Apoyos elásticos en barra</li>
        <li><svg><use href="#f"/><path d="M8 4v10" stroke="#c11" stroke-width="2" stroke-dasharray="2 1"/></svg>No linealidades de barra</li>
        <li><svg><use href="#f"/><path d="M4 12l7-7M6 7h4v5" stroke="#a11" fill="none" stroke-width="1.500"/></svg>Conjuntos de barras</li>
        <li><svg><use href="#f"/><path d="M4 9l4-4 4 3-4 5z" fill="#3c70ac" stroke="#fff"/></svg>Intersecciones de superficies</li>
        <li><svg><use href="#f"/><path d="M4 5h8v8H4zM7 5v8M4 8h8" fill="#9ab" stroke="#345"/></svg>Refinamientos de malla de EF</li>
        <li><svg><use href="#f"/></svg>Liberaciones de nudos</li>
        <li><svg><use href="#f"/></svg>Tipos de liberaciones de líneas</li>
        <li><svg><use href="#f"/><path d="M3 7h5v3H3zM8 9h4v3H8z" fill="#fff" stroke="#88a" stroke-width=".6"/></svg>Liberaciones de líneas</li>
        <li><svg><use href="#f"/><path d="M3 6l4 2 6-3v5l-6 3-4-2z" fill="#5b9bd0" stroke="#357"/></svg>Tipos de liberaciones de superficies</li>
        <li><svg><use href="#f"/><path d="M3 6l4 2 6-3v5l-6 3-4-2z" fill="#5b9bd0" stroke="#357"/></svg>Liberaciones de superficies</li>
        <li><svg><use href="#f"/></svg>Unión de dos barras</li>
        <li><svg><use href="#f"/></svg>Uniones</li>
        <li><svg><use href="#f"/><path d="M4 5l7 7M11 5l-7 7" stroke="#111"/><path d="M3 4h2v2H3zM10 4h2v2h-2zM3 11h2v2H3zM10 11h2v2h-2z" fill="#d11"/></svg>Coacciones en nudo</li>
      </ul></li>
      <li class="node"><button class="exp minus" aria-label="Contraer"></button><svg><use href="#fo"/></svg>Casos de carga y combinaciones</li>
      <li><ul class="sub closed exps">
        <li><button class="exp" aria-label="Expandir"></button><svg><path d="M0 14h14" stroke="#333" stroke-width="2"/><use href="#dn" x="12" y="8"/></svg>Casos de carga</li>
        <li><button class="exp" aria-label="Expandir"></button><svg><use href="#cb"/><circle cx="13" cy="8" r="3" fill="#4c86e0"/></svg>Acciones</li>
        <li><button class="exp" aria-label="Expandir"></button><svg><use href="#cb"/><path d="M8 5h8v2H8zM8 9h8v2H8z" fill="#4c86e0"/></svg>Expresiones de combinación</li>
        <li><button class="exp" aria-label="Expandir"></button><svg><use href="#cb"/><path d="M13 4l3 4-3 4-3-4z" fill="#4c86e0"/></svg>Combinaciones de acciones</li>
        <li><button class="exp" aria-label="Expandir"></button><svg><use href="#cb"/><path d="M11 6h5v4h-5z" fill="#1eb43c" stroke="#063"/></svg>Combinaciones de carga</li>
        <li><button class="exp" aria-label="Expandir"></button><svg><use href="#cb"/><path d="M11 6h5v4h-5z" fill="#4c86e0" stroke="#136"/></svg>Combinaciones de resultados</li>
      </ul></li>
      <li class="node"><button class="exp" aria-label="Expandir"></button><svg><use href="#f"/></svg>Cargas</li>
      <li class="node leaf"><svg><use href="#f"/></svg>Resultados</li>
      <li class="node leaf"><svg><use href="#f"/></svg>Secciones</li>
      <li class="node leaf"><svg><use href="#f"/></svg>Regiones medias</li>
      <li class="node leaf"><svg><use href="#f"/></svg>Informes</li>
      <li class="node"><button class="exp" aria-label="Expandir"></button><svg><use href="#f"/></svg>Objetos auxiliares</li>
      <li class="node"><button class="exp minus" aria-label="Contraer"></button><svg><use href="#fo"/></svg>Módulos adicionales</li>
      <li><ul class="sub mods">
        <li><svg><use href="#modb"/><path d="M3 10l3-4h7l-3 5z" fill="url(#gr)" stroke="#333" stroke-width=".6"/></svg>RF-STEEL Surfaces - Análisis general de t</li>
        <li><svg><use href="#modb"/><path d="M8 5l5-2v6l-4 4H7z" fill="url(#gm)"/><path d="M3 4h6M6 4v8M3 12h6" stroke="#3b4f94" stroke-width="1.500"/></svg><b>RF-STEEL Members - Análisis general d</b></li>
        <li><svg><use href="#mod"/><text x="8" y="14">EC</text></svg>RF-STEEL EC3 - Cálculo de barras de acer</li>
        <li><svg><use href="#mod"/><text x="8" y="14">AISC</text></svg>RF-STEEL AISC - Diseño de barras de ace</li>
        <li><svg><use href="#mod"/><text x="7" y="14">IS</text></svg>RF-STEEL IS - Cálculo de barras de acero</li>
        <li><svg><use href="#mod"/><text x="8" y="14">SIA</text></svg>RF-STEEL SIA - Cálculo de barras de acer</li>
        <li><svg><use href="#mod"/><text x="8" y="14">BS</text></svg>RF-STEEL BS - Cálculo de barras de acero</li>
        <li><svg><use href="#mod"/><text x="8" y="14">GB</text></svg>RF-STEEL GB - Cálculo de barras de acero</li>
        <li><svg><use href="#mod"/><text x="8" y="14">CSA</text></svg>RF-STEEL CSA - Cálculo de barras de ace</li>
        <li><svg><use href="#mod"/><text x="8" y="14">AS</text></svg>RF-STEEL AS - Cálculo de barras de acero</li>
        <li><svg><use href="#mod"/><text x="8" y="14">NTC</text></svg>RF-STEEL NTC-DF - Diseño de barras de</li>
        <li><svg><use href="#mod"/><text x="8" y="14">SP</text></svg>RF-STEEL SP - Cálculo de barras de acero</li>
        <li><svg><use href="#mod"/><text x="8" y="14">PIFM</text></svg>RF-STEEL Plastic - Cálculo de barras de a</li>
        <li><svg><use href="#mod"/><text x="8" y="14">SANS</text></svg>RF-STEEL SANS - Cálculo de barras de ac</li>
        <li><svg><use href="#mod"/><text x="8" y="14">FD</text></svg>RF-STEEL Fatigue Members - Cálculo a fa</li>
        <li><svg><use href="#mod"/><text x="8" y="14">NBR</text></svg>RF-STEEL NBR - Cálculo de barras de ace</li>
        <li><svg><use href="#mod"/><text x="8" y="14">HK</text></svg>RF-STEEL HK - Cálculo de barras de acer</li>
        <li><svg><use href="#mod"/><text x="8" y="14">EC9</text></svg>RF-ALUMINUM - Cálculo de barras de al</li>
        <li><svg><use href="#mod"/><text x="8" y="14">ADM</text></svg>RF-ALUMINUM ADM - Cálculo de barras</li>
        <li><svg><use href="#modb"/><path d="M3 4h3M8 3v10" stroke="#1a8a30" stroke-width="2"/><path d="M8 4c5 2 4 6 0 8" fill="none" stroke="#c22" stroke-width="1.500"/></svg>RF-KAPPA - Análisis de pandeo por flexic</li>
        <li><svg><use href="#modb"/><path d="M4 3h6v9H5zM12 4v8" fill="none" stroke="#444"/><path d="M3 9h3v4H3z" fill="#c22"/></svg>RF-LTB - Análisis de pandeo lateral</li>
        <li><svg><use href="#modb"/><path d="M4 3h6v7H5zM10 8v5h3" fill="none" stroke="#555"/><path d="M3 7h3v3H3z" fill="#c22"/></svg>RF-FE-LTB - Análisis de pandeo lateral po</li>
        <li><svg><use href="#modb"/><path d="M3 6h4M5 6v5M3 11h4" stroke="#46a"/><path d="M9 9h2v3H9z" fill="#c22"/><path d="M11 5h2v5h-2z" fill="#36c"/></svg>RF-EL-PL - Cálculo elástico-plástico</li>
        <li><svg><use href="#modb"/><path d="M3 6l3-3h7v2L8 7v3l5-2v2l-4 3H3z" fill="#888" stroke="#333" stroke-width=".6"/></svg>RF-C-TO-T - Análisis de relaciones de es</li>
        <li><svg><use href="#modb"/><path d="M4 5l8-1v8H5z" fill="#2b4fa0"/><path d="M3 3l3 4M13 3l-3 4" stroke="#111"/></svg>PLATE-BUCKLING - Análisis de abolladur</li>
        <li><svg><use href="#modb"/><path d="M5 12V6l5-3 1 9M5 6l5 3" fill="none" stroke="#111" stroke-width="1.500"/><path d="M3 11h4v2H3zM9 11h4v2H9z" fill="#1a9a30"/></svg>BRACING - Cálculo de arriostramientos c</li>
      </ul></li>
    </ul>
    </div>
    <div class="vbar"><i class="up"></i><i class="thumb"></i><i class="down"></i></div>
    </div>
    <div class="hbar"><i class="left"></i><i class="thumb"></i><i class="right"></i></div>
  </div>
  <div class="navtabs">
    <button class="cur"><svg viewBox="0 0 16 16"><path d="M5 1h10v9H5z" fill="#fff" stroke="#456fae"/><path d="M5 1h10v2H5z" fill="#456fae"/><path d="M0 4h6v8H0z" fill="#efc62c" stroke="#8c6e0c"/><circle cx="9" cy="9" r="3.500" fill="#cfe5fb" stroke="#456"/><path d="M12 12l3 3" stroke="#754" stroke-width="2"/></svg>Datos</button>
    <button><svg><use href="#prop"/></svg>Mostrar</button>
    <button><svg viewBox="0 0 16 16"><path d="M10 1l4 3-6 8-4-3z" fill="#3f6ad0" stroke="#1a3072"/><path d="M4 9c-4 1-4 5 0 6h10M13 6c2 3 1 7-2 9" fill="none" stroke="#1f3c94" stroke-width="1.800"/></svg>Vistas</button>
  </div>
</aside>

<section class="stage">
<div class="viewport">
  <svg class="scene" aria-label="Modelo 3D">
    <g transform="translate(-324 -100)">
      <path d="M606 472L1030 366l0 14L613 484z" fill="#36368e"/>
      <path d="M611 482L1027 378v3L613 485z" fill="#8382ff"/>
      <g fill="#0f0">
        <path d="M824 350l74-17 3 82-72 18z" fill-opacity=".75"/><path d="M833 356l74-17 2 76-73 18z" fill-opacity=".8"/>
        <path d="M824 350l74-17" fill="none" stroke="#7c9a7c"/>
        <ellipse cx="856" cy="374" rx="11" ry="14" fill="#0c0" fill-opacity=".2"/><ellipse cx="866" cy="384" rx="9" ry="14" fill="#5f5" fill-opacity=".25"/>
        <path d="M880 391c2-10 20-18 28 0 5 17-1 26-12 28-8 0-13-4-15-10z" fill="#0c0" fill-opacity=".4"/><path d="M880 382c8-7 20-5 20 10" fill="none" stroke="#085"/>
      </g>
      <path d="M606 472l288-71M613 484l292-72" stroke="#36368e" stroke-width="2"/>
      <path d="M606 472L895 401l10 9L614 484z" fill="#36368e" stroke="#f00" stroke-width="1.500"/><path d="M608 475L890 406M614 480L902 409" stroke="#f00" stroke-dasharray="9 3"/>
      <path d="M614 482L904 411" stroke="#8c8cff" stroke-width="2"/>
      <path d="M683 383l78-18 3 80-78 20z" fill="#f00" fill-opacity=".75"/><path d="M691 389l78-17 2 78-76 19z" fill="#f00" fill-opacity=".85"/>
      <path d="M683 382l78-17" stroke="#a77"/><path d="M741 416c6-8 26-8 30 14-1 17-8 24-18 25-9 1-13-3-17-8z" fill="#c00" fill-opacity=".4"/><path d="M740 415c12-5 24 0 20 20" fill="none" stroke="#a00"/>
      <ellipse cx="715" cy="406" rx="13" ry="15" fill="#c00" fill-opacity=".2"/><ellipse cx="728" cy="416" rx="10" ry="14" fill="#f33" fill-opacity=".4"/><ellipse cx="738" cy="422" rx="9" ry="11" fill="#d00" fill-opacity=".25"/>
      <path d="M690 459L771 438M692 463l79-21" stroke="#a00" stroke-opacity=".6"/>
      <path d="M759 453l10 22-17 6 8 14 2 19M752 508l18 13" fill="none" stroke="#f00"/>
      <path d="M900 417l10 22-18 6 9 14 1 18M893 472l18 12M934 389v4l-4-1M934 405v-4l-4 2M961 383l3 3M974 391l4 3" fill="none" stroke="#0f0"/>
      <g fill="#0f0"><path d="M1029 361l66-16v92l-65 1z" fill-opacity=".8"/><path d="M1037 367l58-14v78l-56 15z" fill-opacity=".7"/><path d="M1030 438l65-16v9l-56 15z" fill="#8f8" fill-opacity=".8"/></g>
      <path d="M1029 368l66-16v5l-66 16z" fill="#0b980b"/><ellipse cx="1045" cy="381" rx="20" ry="17" fill="#2d2" fill-opacity=".6"/><ellipse cx="1079" cy="401" rx="13" ry="16" fill="#0c0" fill-opacity=".6"/>
      <path d="M1039 446l56-15" stroke="#0a0"/><path d="M1035 383l8 23-17 4 8 17 1 15M1026 436l18 13" fill="none" stroke="#0e0"/>
      <ellipse cx="610" cy="498" rx="22" ry="20" fill="#0f0" fill-opacity=".75"/>
      <path d="M554 534l56-33 23 13 37 30-82 22z" fill="#0d0" fill-opacity=".75"/><path d="M554 534l39-23 17 6 23-3z" fill="#9f9" fill-opacity=".6"/>
      <path d="M598 538c2-6 28-6 29 0l1 42c-3 8-28 8-30 0z" fill="#0e0" fill-opacity=".55"/><ellipse cx="613" cy="580" rx="15" ry="6" fill="#0b0" fill-opacity=".5"/>
      <path d="M608 478l-26 6" stroke="#0f0" stroke-width="2"/><path d="M573 486l9-5 2 5z" fill="#0a0"/>
      <path d="M609 479l10 8" stroke="#f00" stroke-width="2"/><path d="M625 491l-8-2 4-5z" fill="#a00"/>
      <path d="M610 479v28" stroke="#00f" stroke-width="2"/><path d="M611 514l-3-10h6z" fill="#00a"/>
      <text x="558" y="494" fill="#0e0">Y</text><text x="626" y="499" fill="#f00">X</text><text x="608" y="529" fill="#00f">Z</text>
      <path d="M380 768l-26 4" stroke="#0f0" stroke-width="2"/><path d="M346 773l9-5 1 6z" fill="#0a0"/>
      <path d="M380 768l16 5" stroke="#f00" stroke-width="2"/><path d="M404 775l-8 1 2-6z" fill="#a00"/>
      <path d="M380 768v30" stroke="#00f" stroke-width="2"/><path d="M380 809l-3-12h6z" fill="#00a"/>
      <text x="329" y="784" fill="#0e0">Y</text><text x="397" y="789" fill="#f00">X</text><text x="379" y="819" fill="#00f">Z</text>
    </g>
  </svg>

  <section class="dialog editnode" aria-label="Editar nudo">
    <h2>Editar nudo<button aria-label="Cerrar"><svg><use href="#cls"/></svg></button></h2>
    <div class="dlgbody">
      <div class="tabs" role="tablist"><button class="cur">Coordenadas del nudo</button><button>Apoyo</button><button>Malla de EF</button></div>
      <div class="page">
        <div class="col">
          <section class="box"><h3><label for="num">Nudo <u>n</u>úm.</label></h3><div class="boxbody"><input id="num" class="full" value="29" readonly></div></section>
          <section class="box grow"><h3>Coordenadas</h3><div class="boxbody fields">
            <label for="ref"><u>N</u>udo de refe-<br>rencia núm.:</label><div class="ctl"><select id="ref" class="w66"><option>0</option></select><button class="ib" aria-label="Seleccionar nudo"><svg viewBox="0 0 16 16"><path d="M3 1l7 6M9 0L3 7" stroke="#d22" stroke-width="2"/><path d="M6 4l1 9 2-2 3 5 2-1-3-5 3-1z" fill="#fff" stroke="#222" stroke-width=".8"/></svg></button></div>
            <label for="sys">Sistema de<br><u>c</u>oordenadas:</label><div class="ctl"><select id="sys" class="gray w117"><option>Cartesiano</option></select></div>
            <label for="cx" class="one">Coordenada X:</label><div class="ctl"><span class="spin"><input id="cx" value="0.0"><span class="ud"><button aria-label="Más"></button><button class="less" aria-label="Menos"></button></span><button class="more" aria-label="Precisión"></button></span>[mm]</div>
            <label for="cy" class="one">Coordenada Y:</label><div class="ctl"><span class="spin"><input id="cy" value="-500.0"><span class="ud"><button aria-label="Más"></button><button class="less" aria-label="Menos"></button></span><button class="more" aria-label="Precisión"></button></span>[mm]</div>
            <label for="cz" class="one">Coordenada Z:</label><div class="ctl"><span class="spin"><input id="cz" value="0.0"><span class="ud"><button aria-label="Más"></button><button class="less" aria-label="Menos"></button></span><button class="more" aria-label="Precisión"></button></span>[mm]</div>
          </div></section>
          <section class="box"><h3><label for="com"><u>C</u>omentario</label></h3><div class="boxbody"><select id="com" class="flex1"><option>Apoyado</option></select><button class="ib" aria-label="Comentarios"><svg viewBox="0 0 16 16"><g fill="#d9cc96" stroke="#574e22"><path d="M1 2h9v6H1zM3 4h9v6H3zM6 7h9v6H6z"/></g></svg></button></div></section>
        </div>
        <div class="col">
          <section class="box"><h3><label for="tipo">Tipo de nudo</label></h3><div class="boxbody"><select id="tipo" class="gray w150"><option>Estándar</option></select><button class="ib dim" aria-label="Bloquear"><svg viewBox="0 0 16 16"><path d="M4 8V4c0-4 8-4 8 0v4" fill="none" stroke="#888" stroke-width="1.600"/><path d="M3 7h10v8H3z" fill="#bbb" stroke="#888"/></svg></button></div></section>
          <section class="hint"><p>Sistema de coordenadas 'Cartesiano'</p><b>x</b></section>
        </div>
      </div>
      <div class="foot">
        <button class="ib" aria-label="Ayuda"><svg viewBox="0 0 16 16"><circle cx="8" cy="7" r="6" fill="#fff" stroke="#556" stroke-width="1.200"/><path d="M4 15v-3l4 1z" fill="#667"/><path d="M6 5.500c0-3 4-3 4-.5 0 2-2 1.500-2 3.500M8 9.500v1.500" fill="none" stroke="#2947a0" stroke-width="1.600"/></svg></button><button class="ib dim" aria-label="Editar"><svg viewBox="0 0 16 16"><path d="M2 2h10v13H2z" fill="#eee" stroke="#999"/><path d="M4 5h5M4 8h4M4 11h3" stroke="#aaa"/><path d="M7 13l7-11 1 1-6 10z" fill="#888"/></svg></button><button class="ib" aria-label="Unidades"><svg viewBox="0 0 16 16"><path d="M0 1h16v4H0z" fill="#4db35c" stroke="#267a34"/><text x="0" y="14" class="t8i">0.00</text></svg></button>
        <button class="pb def">Aceptar</button><button class="pb">Cancelar</button>
      </div>
    </div>
  </section>

  <section class="dialog precision" aria-label="Precisión total">
    <h2>Precisión total<button class="red" aria-label="Cerrar">x</button></h2>
    <div class="dlgbody">
      <section class="box"><h3>Valor con precisión total</h3><div class="prec">
        <div class="prow"><label for="val"><u>V</u>alor:</label><input id="val" class="focus" value="-5.55111512312578E-14">[mm]</div>
        <div class="prow"><span class="lab"></span><input type="checkbox" id="ef" checked><label for="ef" class="auto"><u>E</u>-formato</label></div>
        <hr>
        <div class="prow"><label for="prc">Precisión:</label><input id="prc" class="sunk" value="Doble" readonly></div>
      </div></section>
      <hr>
      <div class="foot"><button class="pb def">Aceptar</button><button class="pb">Cancelar</button></div>
    </div>
  </section>
  <svg class="callout" viewBox="0 0 100 30" aria-hidden="true"><path d="M2 3h12v23H2z" fill="none" stroke="#0000f5" stroke-width="3"/><path d="M44 15h48" stroke="#00f" stroke-width="2"/><path d="M98 15l-11-5v10z" fill="#00f"/></svg>
</div>

<section class="tablepane">
  <h2 class="panehead">1.1 Nudos<svg><use href="#pin"/></svg><svg><use href="#cls"/></svg></h2>
  <div class="toolbar2">
    <button class="on" aria-label="Tabla activa"><svg><use href="#t1"/></svg></button><button aria-label="Insertar"><svg><use href="#t2"/></svg></button><button aria-label="Abajo"><svg><use href="#t3"/></svg></button><button aria-label="Resultados"><svg><use href="#t4"/></svg></button><button aria-label="Gráfico"><svg><use href="#t5"/></svg></button><i class="sep"></i>
    <button aria-label="Tabla anterior"><svg><use href="#t6"/></svg></button><button aria-label="Tabla siguiente"><svg><use href="#t7"/></svg></button><i class="sep"></i>
    <button class="on" aria-label="Sincronizar"><svg><use href="#t8"/></svg></button><button class="on" aria-label="Sincronizar gráfico"><svg><use href="#t9"/></svg></button><button aria-label="Actualizar"><svg><use href="#t10"/></svg></button><i class="sep"></i>
    <button aria-label="Añadir"><svg><use href="#p1"/></svg></button><button aria-label="Multiplicar"><svg><use href="#p2"/></svg></button><button aria-label="Dividir"><svg><use href="#p3"/></svg></button><i class="sep"></i>
    <button aria-label="Vaciar"><svg><use href="#p4"/></svg></button><i class="sep"></i>
    <button aria-label="Eliminar fila"><svg><use href="#r1"/></svg></button><button aria-label="Insertar fila"><svg><use href="#r2"/></svg></button><button aria-label="Mover fila"><svg><use href="#r3"/></svg></button><i class="sep"></i>
    <button aria-label="Marcar"><svg><use href="#y1"/></svg></button><button aria-label="Filas"><svg><use href="#y2"/></svg></button><i class="sep"></i>
    <button aria-label="Editar tabla"><svg><use href="#edt"/></svg></button><i class="sep"></i>
    <button aria-label="Propiedades"><svg><use href="#prop"/></svg></button><button aria-label="Comprobar tabla"><svg><use href="#glas"/></svg></button><button aria-label="Excel"><svg><use href="#xls"/></svg></button><button aria-label="Calculadora"><svg><use href="#calc"/></svg></button><i class="sep"></i>
    <button aria-label="Parámetros"><svg viewBox="0 0 16 16"><use href="#ab"/><text x="0" y="15" class="t8i">ab=</text></svg></button><button aria-label="Fórmula"><svg viewBox="0 0 16 16"><text x="3" y="12" class="fx">f<tspan class="fxs" dy="2">x</tspan></text></svg></button><button aria-label="Quitar fórmula"><svg viewBox="0 0 16 16"><use href="#fxx"/><text x="4" y="12" class="fx">f<tspan class="fxs" dy="2">x</tspan></text></svg></button><i class="sep"></i>
    <button aria-label="Bloqueo"><svg><use href="#lock"/></svg></button>
  </div>
  <div class="sheet">
    <table>
      <colgroup><col class="c0"><col class="c1"><col class="c2"><col class="c3"><col class="c4"><col class="c4"><col class="c4"><col></colgroup>
      <thead>
        <tr class="letters"><th rowspan="3" class="corner">Nudo<br>núm.</th><th class="pick">A</th><th>B</th><th>C</th><th>D</th><th>E</th><th>F</th><th>G</th></tr>
        <tr class="caps top"><th></th><th>Nudo de</th><th>Sistema de</th><th colspan="3">Coordenadas del nudo</th><th></th></tr>
        <tr class="caps"><th>Tipo de nudo</th><th>referencia</th><th>coordenadas</th><th>X [mm]</th><th>Y [mm]</th><th>Z [mm]</th><th>Comentario</th></tr>
      </thead>
      <tbody>
        <tr><th class="pick">29</th><td></td><td></td><td></td><td></td><td></td><td></td><td></td></tr>
        <tr><th>30</th><td></td><td></td><td></td><td></td><td></td><td></td><td></td></tr>
        <tr><th>31</th><td></td><td></td><td></td><td></td><td></td><td></td><td></td></tr>
        <tr><th>32</th><td></td><td></td><td></td><td></td><td></td><td></td><td class="off"></td></tr>
        <tr><th>33</th><td></td><td></td><td></td><td></td><td></td><td></td><td class="off"></td></tr>
        <tr><th>34</th><td></td><td></td><td></td><td></td><td></td><td></td><td class="off"></td></tr>
      </tbody>
    </table>
    <div class="vbar"><i class="up"></i><i class="thumb"></i><i class="down"></i></div>
  </div>
  <div class="sheettabs">
    <button class="cur">Nudos</button><button>Líneas</button><button>Materiales</button><button>Superficies</button><button>Sólidos</button><button>Huecos</button><button>Apoyos en nudos</button><button>Apoyos en línea</button><button>Apoyos en superficie</button><button>Articulaciones lineales</button><button>Secciones</button><button>Articulaciones en barras</button><button>Excentricidades de barras</button><button>Divisiones de barras</button><button>Barras</button><button>Apoyos elásticos en barra</button><button>No linealidades de barras</button><button>Conjuntos de barras</button>
    <div class="pager"><button disabled aria-label="Primera"><svg viewBox="0 0 10 10"><path d="M2 1v8M8 1L4 5l4 4z" stroke="currentColor" fill="currentColor"/></svg></button><button disabled aria-label="Previa"><svg viewBox="0 0 10 10"><path d="M7 1L3 5l4 4z" fill="currentColor"/></svg></button><button aria-label="Próxima"><svg viewBox="0 0 10 10"><path d="M3 1l4 4-4 4z" fill="currentColor"/></svg></button><button aria-label="Última"><svg viewBox="0 0 10 10"><path d="M8 1v8M2 1l4 4-4 4z" stroke="currentColor" fill="currentColor"/></svg></button></div>
  </div>
</section>
</section>
</main>
<footer class="status"><span>FORZC</span><span class="up">REJILLA</span><span>CARTES</span><span>REFENT</span><span>GLN</span><span>DXF</span><i class="s1"></i><i class="s2"></i><i class="s3"></i><i class="s3"></i><i class="s3"></i></footer>
</body>
</html>
```
FILE: styles.css
```css
* { box-sizing: border-box; }
html, body { margin: 0; height: 100%; }
body {
  display: flex; flex-direction: column; min-height: 100vh; overflow: hidden;
  background: #d0d5de; color: #000;
  font: 11px/14px "Liberation Sans", Arial, sans-serif;
}
button, input, select { font: inherit; color: inherit; margin: 0; }
button { border: 0; background: none; padding: 0; }
h1, h2, h3, p, ul { margin: 0; padding: 0; font-size: inherit; font-weight: normal; }
ul { list-style: none; }
a { color: inherit; text-decoration: none; }
.sprite { position: absolute; width: 0; height: 0; }
.t6 { font: 7px "Liberation Sans", sans-serif; fill: #555; }
.t9 { font: bold 10px "Liberation Serif", serif; }
.t8i { font: italic bold 8px "Liberation Serif", serif; }
.fx { font: italic 15px "Liberation Serif", serif; fill: #555; }
.fxs { font: italic 11px "Liberation Serif", serif; fill: #555; }

.titlebar { flex: none; height: 23px; display: flex; align-items: center; background: #fff; padding: 0 10px 0 2px; }
.titlebar .app { width: 18px; height: 18px; margin-right: 4px; }
.titlebar h1 { flex: 1; color: #858585; font: 11px/16px "Open Sans", sans-serif; }
.winctl { display: flex; gap: 13px; color: #777; }
.winctl button { width: 32px; height: 20px; }
.winctl svg { width: 10px; height: 10px; }

.menubar { flex: none; height: 24px; display: flex; align-items: center; padding: 0 6px 0 2px; color: #3d4048; font: 11px/16px "Open Sans", sans-serif; }
.menubar .mdi { width: 16px; height: 14px; margin: 0 2px 0 0; }
.menubar a { padding: 0 8px 0 7px; }
.mdictl { margin-left: auto; display: flex; gap: 5px; color: #555; }
.mdictl button { width: 11px; height: 14px; }
.mdictl svg { width: 9px; height: 9px; }

.grip { flex: none; width: 3px; height: 15px; margin: 0 4px 0 3px; background: repeating-linear-gradient(#9aa1ad 0 2px, transparent 2px 4px) 0 0 / 2px 100% no-repeat; }
.toolrow { flex: none; height: 26px; display: flex; background: #c9ced7; padding-left: 1px; }
.group { display: flex; align-items: center; padding-right: 2px; border-radius: 3px; background: linear-gradient(#f0f3f9, #dfe4ee 60%, #d2d8e3); border-bottom: 1px solid #b4bac5; }
.group.apart { margin-left: 14px; }
.group button { flex: none; width: 22px; height: 24px; display: flex; align-items: center; justify-content: center; }
.group svg { width: 18px; height: 18px; }
.toolbar2 svg { width: 16px; height: 16px; }
.group button.dd { width: 35px; justify-content: flex-start; padding-left: 2px; }
.dd::after { content: ""; margin-left: 5px; border: 3px solid transparent; border-top-color: #666; border-bottom: 0; }
.group button.on, .toolbar2 button.on { background: linear-gradient(#fbdcaa, #f8c374 45%, #fdd98e); box-shadow: inset 0 0 0 1px #c2a06a; border-radius: 2px; }
.sep { flex: none; width: 8px; height: 17px; background: linear-gradient(#a9b0bd, #a9b0bd) 3px 0 / 1px 100% no-repeat; }
.casebox { appearance: none; width: 216px; height: 22px; margin: 0 4px 0 2px; border: 0; padding: 0 16px 0 3px; overflow: hidden; font: 11px/16px "Open Sans", sans-serif; background: #fff url("data:image/svg+xml,%3Csvg xmlns='http://www.w3.org/2000/svg' width='6' height='4'%3E%3Cpath d='M0 0h6L3 4z' fill='%23666'/%3E%3C/svg%3E") right 4px center no-repeat; }

.work { flex: 1; min-height: 0; display: flex; gap: 4px; border-top: 1px solid #a2a8b3; }
.navigator { flex: none; width: 320px; display: flex; flex-direction: column; }
.panehead { flex: none; height: 20px; display: flex; align-items: center; gap: 8px; padding: 0 7px 2px 4px; background: #b9c0cb; color: #33363c; font: 11px/16px "Open Sans", sans-serif; }
.panehead svg { width: 9px; height: 9px; color: #444; }
.panehead svg:first-of-type { margin-left: auto; }
.treebox { flex: 1; min-height: 0; margin: 1px 1px 0 0; border: 1px solid #8f949f; border-width: 1px 0 1px 1px; outline: 2px solid #e4e9f2; outline-offset: -1px; padding: 1px 3px 1px 2px; display: flex; flex-direction: column; background: #fcfcf5; }
.treeview { flex: 1; min-height: 0; display: flex; }
.treeclip { flex: 1; min-width: 0; overflow: hidden; }
.tree { font: 11px/18px "Noto Sans", sans-serif; white-space: nowrap; background: repeating-linear-gradient(#777 0 1px, transparent 1px 2px) 31px 0 / 1px 100% no-repeat; }
.tree svg { flex: none; width: 16px; height: 16px; }
.tree svg text { font: bold 7px "Liberation Sans", sans-serif; text-anchor: middle; fill: #222; }
.sub li, .node { height: 18px; display: flex; align-items: center; gap: 4px; }
.sub { background: repeating-linear-gradient(#777 0 1px, transparent 1px 2px) 50px 0 / 1px 100% no-repeat; }
.sub.closed { background-size: 1px calc(100% - 9px); }
.sub li { padding-left: 62px; background: repeating-linear-gradient(90deg, #777 0 1px, transparent 1px 2px) 50px 9px / 11px 1px no-repeat; }
.sub.exps li { padding-left: 46px; gap: 0; background-position: 55px 9px; background-size: 7px 1px; }
.exps svg { margin: 0 4px 0 7px; }
.node { padding-left: 27px; gap: 0; background: repeating-linear-gradient(90deg, #777 0 1px, transparent 1px 2px) 31px 9px / 11px 1px no-repeat; }
.node svg { margin: 0 4px 0 7px; }
.node.leaf { padding-left: 36px; }
.exp { flex: none; width: 9px; height: 9px; border: 1px solid #8e8f8f; background: linear-gradient(#2a3f9a, #2a3f9a) center / 5px 1px no-repeat, linear-gradient(#2a3f9a, #2a3f9a) center / 1px 5px no-repeat, #fff; }
.exp.minus { background: linear-gradient(#2a3f9a, #2a3f9a) center / 5px 1px no-repeat, #fff; }
.vbar { flex: none; width: 17px; display: flex; flex-direction: column; align-items: center; background: #f0f0f0; }
.vbar .up, .vbar .down, .hbar .left, .hbar .right { width: 6px; height: 6px; border: solid #444; border-width: 2px 0 0 2px; transform: rotate(45deg); margin: 8px 0 0; }
.vbar .down { transform: rotate(225deg); margin: auto 0 7px; }
.vbar .thumb { width: 15px; height: 394px; margin-top: 192px; background: #cdcdcd; }
.hbar { flex: none; height: 17px; display: flex; align-items: center; background: #f0f0f0; }
.hbar .left { transform: rotate(-45deg); margin: 0 6px 0 7px; }
.hbar .thumb { width: 118px; height: 15px; background: #cdcdcd; }
.hbar .right { transform: rotate(135deg); margin: 0 24px 0 auto; }
.navtabs { flex: none; height: 26px; display: flex; align-items: flex-start; gap: 6px; padding: 2px 0 0 4px; color: #33363c; font: 11px/18px "Open Sans", sans-serif; }
.navtabs button { display: flex; align-items: center; gap: 2px; height: 19px; padding: 0 3px 0 2px; }
.navtabs .cur { background: #f0f5fb; border-radius: 0 0 3px 3px; }
.navtabs svg { width: 16px; height: 16px; }

.stage { flex: 1; min-width: 0; display: flex; flex-direction: column; gap: 6px; }
.viewport { flex: 1; min-height: 0; position: relative; overflow: hidden; background: #fff; box-shadow: inset 2px 1px 0 #5f646c; }
.scene { display: block; width: 100%; height: 100%; }
.scene text { font: 10px "Liberation Mono", monospace; }

.dialog { position: absolute; background: #f0f0f0; }
.dialog h2 { display: flex; align-items: center; height: 25px; background: #fff; }
.dialog .dlgbody { display: flex; flex-direction: column; }
.editnode { left: 768px; top: 231px; width: 589px; border: 1px solid #a0a0a0; box-shadow: 2px 3px 10px rgba(0,0,0,.4); }
.editnode h2 { padding: 0 10px 1px 3px; color: #8a8a8a; font: 11px/16px "Open Sans", sans-serif; }
.editnode h2 button { margin-left: auto; width: 12px; height: 14px; }
.editnode h2 svg { width: 12px; height: 12px; }
.editnode .dlgbody { padding: 7px 7px 8px; }
.tabs { display: flex; align-items: flex-end; height: 20px; }
.tabs button { height: 18px; border: 1px solid #dcdcdc; border-left: 0; border-bottom: 0; padding: 0 4px; }
.tabs .cur { height: 21px; margin-bottom: -1px; background: #fff; padding: 0 4px 2px 6px; position: relative; }
.page { display: grid; grid-template-columns: 300px 1fr; gap: 8px; height: 378px; padding: 9px 6px 8px 7px; background: #fff; border: 1px solid #dcdcdc; }
.col { display: flex; flex-direction: column; gap: 9px; min-width: 0; }
.box { display: flex; flex-direction: column; }
.box h3 { flex: none; height: 16px; line-height: 16px; padding-left: 2px; background: #dbe5f5; color: #1d4568; clip-path: polygon(0 0, calc(100% - 11px) 0, 100% 11px, 100% 100%, 0 100%); }
.boxbody { flex: 1; display: flex; gap: 4px; padding: 3px 3px 4px 2px; border: 1px solid #a3a1ec; border-top-color: #fff; border-left-color: #dbe3f3; background: linear-gradient(#eef3fa, #f2f5fa); }
.box.grow { flex: 1; }
input, select { min-width: 0; }
.full { flex: 1; height: 20px; border: 1px solid #7a7a7a; background: #f0f0f0; padding: 0 2px; }
select { appearance: none; height: 21px; border: 1px solid #7a7a7a; border-radius: 0; padding: 0 18px 0 2px; background: #fff url("data:image/svg+xml,%3Csvg xmlns='http://www.w3.org/2000/svg' width='9' height='6'%3E%3Cpath d='M1 1l3.500 3.500L8 1' fill='none' stroke='%23444'/%3E%3C/svg%3E") right 4px center no-repeat; }
select.gray { background-color: #e1e1e1; border-color: #adadad; padding-left: 3px; }
.flex1 { flex: 1; }
.w66 { width: 66px; }
.w117 { width: 117px; }
.w150 { width: 151px; }
.ib { flex: none; width: 25px; height: 21px; display: flex; align-items: center; justify-content: center; border: 1px solid #adadad; background: #e1e1e1; }
.ib.dim { background: #ccc; border-color: #bfbfbf; }
.ib svg { width: 16px; height: 16px; }
.fields { display: grid; grid-template-columns: 84px 1fr; grid-template-rows: 31px 58px 20px 20px 20px; align-content: start; gap: 3px 0; padding-top: 7px; line-height: 13px; }
.fields label { padding-top: 1px; }
.fields label.one { padding: 4px 0 0; }
.fields .ctl { display: flex; align-items: flex-end; gap: 3px; }
.fields label[for=sys] { padding-top: 9px; }
.fields label[for=sys] + .ctl { align-items: flex-start; padding-top: 17px; }
.fields .one + .ctl { align-items: center; }
.spin { display: flex; align-items: center; width: 84px; height: 20px; border: 1px solid #7f9db9; background: #fff; padding: 1px; }
.spin input { flex: 1; border: 0; padding: 0 2px; height: 16px; text-align: right; background: #fff; outline: 0; }
.ud { display: flex; flex-direction: column; width: 12px; }
.ud button, .more { display: flex; align-items: center; justify-content: center; height: 8px; width: 12px; background: #e8e8e8; box-shadow: inset 0 0 0 1px #b5b5b5; }
.ud button::after { content: ""; border: 3px solid transparent; border-bottom-color: #000; border-top: 0; }
.ud .less::after { border-top: 3px solid #000; border-bottom: 0; }
.more { flex: none; width: 10px; height: 17px; margin-left: 1px; }
.more::after { content: ""; border: 3px solid transparent; border-left-color: #000; border-right: 0; }
.hint { flex: 1; border: solid #9a9a9a; border-width: 1px 0 0 1px; padding: 1px 2px; background: radial-gradient(ellipse at 10% 100%, #fff 35%, #fdf8e9 80%, #faf1d6); }
.hint b { display: block; margin: 79px 8px 0 0; text-align: right; color: #d8171b; font: bold 16px/18px "Liberation Sans", sans-serif; }
.foot { display: flex; gap: 10px; margin-top: 10px; }
.pb { width: 73px; height: 21px; border: 1px solid #adadad; background: #e1e1e1; text-align: center; }
.pb.def { border: 2px solid #0078d7; margin-left: auto; }
.precision { left: 1031px; top: 400px; width: 285px; border-top: 1px solid #555; box-shadow: 0 3px 18px rgba(0,0,0,.55); }
.precision h2 { font: 11px/16px "Open Sans", sans-serif; padding: 0 1px 2px 3px; }
.red { margin-left: auto; width: 19px; height: 19px; background: #c75050; color: #fff; font: bold 9px/16px "Open Sans", sans-serif; }
.precision .dlgbody { padding: 8px 7px 8px 8px; }
.prec { display: flex; flex-direction: column; height: 90px; padding: 4px 3px 0 2px; border: 1px solid #a3a1ec; border-top-color: #fff; border-left-color: #dbe3f3; background: #f0f4fb; }
.prow { display: flex; align-items: center; gap: 3px; height: 20px; margin-bottom: 4px; }
.prow label, .prow .lab { width: 49px; }
.prow .auto { width: auto; }
.prow input[type=checkbox] { appearance: none; width: 13px; height: 13px; border: 1px solid #333; background: #fff url("data:image/svg+xml,%3Csvg xmlns='http://www.w3.org/2000/svg' width='11' height='11'%3E%3Cpath d='M2 5l3 3 5-6' fill='none' stroke='%23222' stroke-width='1.2'/%3E%3C/svg%3E"); }
.focus { width: 120px; height: 20px; border: 1px solid #0078d7; background: #fff; padding: 0 0 0 2px; }
.sunk { width: 63px; height: 16px; border: 1px solid #fff; border-top-color: #999; border-left-color: #999; background: #f0f4fb; padding: 0 1px; }
hr { width: 100%; height: 2px; margin: 0; border: 0; border-top: 1px solid #a0a0a0; background: #fff; }
.prec hr { margin: 2px 0 7px; flex: none; }
.precision .dlgbody > hr { margin-top: 8px; }
.callout { position: absolute; left: 940px; top: 463px; width: 100px; height: 30px; filter: drop-shadow(2px 4px 2px rgba(0,0,0,.35)); }

.tablepane { flex: none; display: flex; flex-direction: column; background: #f0f0f0; padding-bottom: 20px; }
.toolbar2 { flex: none; height: 25px; display: flex; align-items: center; padding-left: 8px; background: linear-gradient(#e9eef9, #d3d8e1); }
.toolbar2 button { width: 22px; height: 22px; display: flex; align-items: center; justify-content: center; }
.sheet { display: flex; height: 166px; border: solid #666; border-width: 1px 1px 0 1px; padding: 3px 2px 0 1px; align-items: flex-start; }
.sheet table { flex: 1; table-layout: fixed; border-collapse: collapse; width: 100%; }
.sheet .vbar { height: 143px; }
.sheet .vbar .thumb { height: 17px; margin-top: 79px; }
.sheet .vbar .up, .sheet .vbar .down { width: 5px; height: 5px; }
.c0 { width: 45px; } .c1 { width: 85px; } .c2 { width: 71px; } .c3 { width: 90px; } .c4 { width: 78px; }
.sheet th, .sheet td { padding: 0; height: 16px; line-height: 14px; font-weight: normal; border: 1px solid #9a9a9a; overflow: hidden; }
.sheet td { background: #fff; }
.sheet td.off { background: #f0f0f0; }
.sheet .letters th { height: 14px; line-height: 12px; background: #e1e1e1; box-shadow: inset 1px 1px 0 #fff; border-color: #777; }
.sheet .letters .corner { line-height: 14px; background: #f0f0f0; vertical-align: middle; padding-top: 4px; }
.sheet .caps th { background: #f0f0f0; border-top: 0; }
.sheet .caps.top th { border-bottom: 0; }
.sheet tbody th { background: #e1e1e1; box-shadow: inset 1px 1px 0 #fff; border-color: #777; }
.sheet tr .pick { color: #fff; }
.sheet .letters .pick, .sheet tbody .pick { background: #0078d7; }
.sheettabs { display: flex; height: 17px; border-top: 1px solid #666; white-space: nowrap; overflow: hidden; }
.sheettabs > button { flex: none; padding: 0 3px; height: 16px; background: #e6e6e6; border: solid #777; border-width: 0 1px 1px 0; border-radius: 0 0 5px 5px; }
.sheettabs > .cur { background: #f0f0f0; border-left: 1px solid #777; }
.pager { margin-left: auto; display: flex; padding-right: 2px; }
.pager button { width: 15px; height: 16px; display: flex; align-items: center; justify-content: center; background: #ececec; box-shadow: inset -1px -1px 0 #999, inset 1px 1px 0 #fff; }
.pager button:disabled { color: #999; }
.pager svg { width: 9px; height: 9px; }

.status { flex: none; height: 21px; display: flex; align-items: stretch; justify-content: flex-end; gap: 1px; border-top: 1px solid #8e959f; background: linear-gradient(#d2d7de, #b3bac4 50%, #a3aab5 55%, #aeb5bf); font: 12px/17px "Liberation Sans", sans-serif; color: #222; overflow: hidden; }
.status span { margin-top: 1px; border: 1px solid #111; border-right-color: #f4f4f4; border-bottom: 0; }
.status .up { border-color: #fff #666 #666 #fff; line-height: 16px; }
.status i { border-left: 1px solid #9299a4; margin-top: 1px; }
.s1 { width: 188px; } .s2 { width: 88px; } .s3 { width: 74px; }
```
